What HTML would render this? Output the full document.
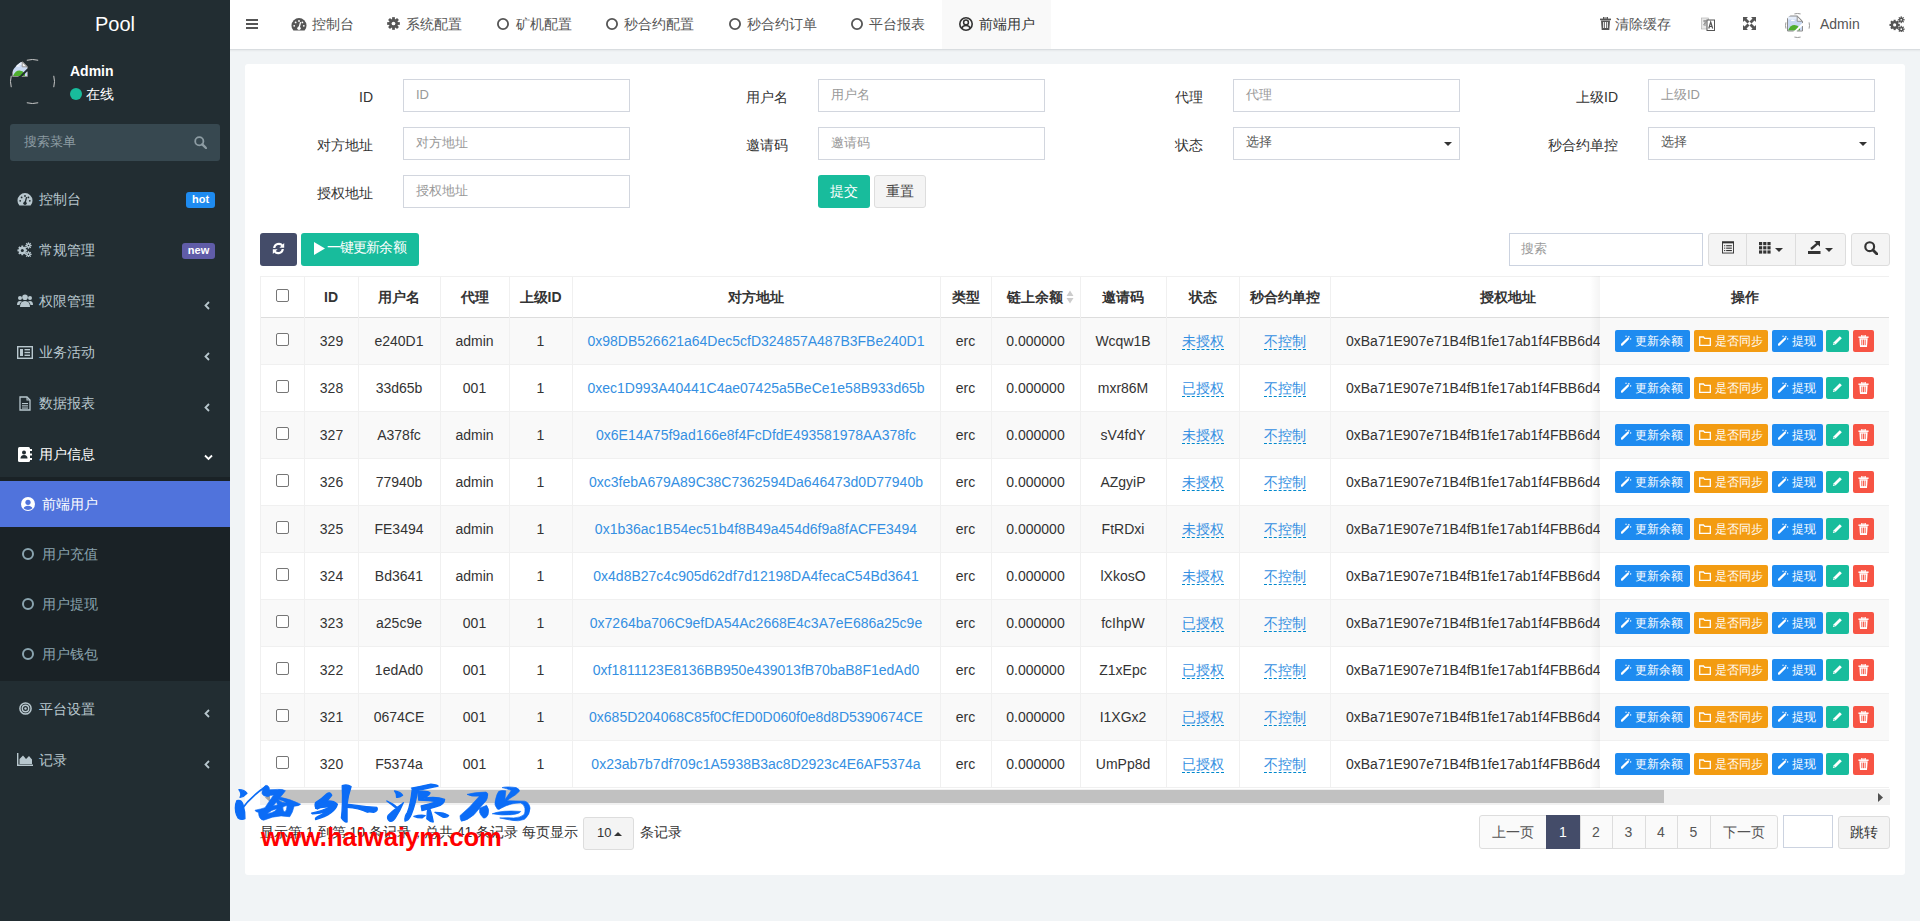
<!DOCTYPE html><html><head><meta charset="utf-8"><style>*{box-sizing:border-box}
html,body{margin:0;padding:0}
body{width:1920px;height:921px;overflow:hidden;background:#f1f4f6;font-family:"Liberation Sans",sans-serif;font-size:14px;color:#333;position:relative}
.abs{position:absolute}
.tx{white-space:nowrap;line-height:20px}
svg{display:block}
.ed{border-bottom:1px dashed #0088cc;padding-bottom:0}
</style></head><body><div class="abs" style="left:0px;top:0px;width:230px;height:921px;background:#222d32"></div>
<div class="abs tx" style="left:15.0px;top:14.0px;width:200px;text-align:center;line-height:20px;font-size:20px;color:#fff;font-weight:normal;">Pool</div>
<svg class="abs" style="left:9.0px;top:58.0px" width="47.0" height="47.0" viewBox="0 0 47.0 47.0" ><defs><clipPath id="cpa"><circle cx="23.5" cy="23.5" r="22.5"/></clipPath></defs><g clip-path="url(#cpa)"><g transform="translate(3.0,3.0)"><path d="M1 1 H10 L15 6 V15 H1 Z" fill="#c9d9f3"/><path d="M1 1 H10 L11 4 H1 Z" fill="#e6eefb"/><path d="M4 5 Q5 3.6 6.3 4.4 Q7.6 4 7.8 5.4 H4 Z" fill="#fff"/><path d="M1 15 Q3.5 9.5 7.5 9.6 Q10.5 9.8 13 12.5 V15 Z" fill="#4fae2e"/><path d="M15.6 7.2 L6.8 16 H9.6 L15.6 10 Z" fill="#222d32"/><path d="M10.2 0.8 V5.8 H15.2 Z" fill="#f4f4f4" stroke="#8a8a8a" stroke-width="0.9"/><path d="M0.5 15.5 V0.5 H10.3 L15.5 5.7 V7.6" fill="none" stroke="#8a8a8a" stroke-width="1"/><path d="M15.5 10.6 V15.5 H9.8" fill="none" stroke="#8a8a8a" stroke-width="1"/><path d="M0.5 15.5 H6.6" fill="none" stroke="#8a8a8a" stroke-width="1"/></g></g><path d="M44.75 17.81 A22.0 22.0 0 0 1 44.75 29.19" fill="none" stroke="#c8c8c8" stroke-width="1"/><path d="M29.19 44.75 A22.0 22.0 0 0 1 17.81 44.75" fill="none" stroke="#c8c8c8" stroke-width="1"/><path d="M2.25 29.19 A22.0 22.0 0 0 1 2.25 17.81" fill="none" stroke="#c8c8c8" stroke-width="1"/><path d="M17.81 2.25 A22.0 22.0 0 0 1 29.19 2.25" fill="none" stroke="#c8c8c8" stroke-width="1"/></svg>
<div class="abs tx" style="left:70px;top:61.0px;line-height:20px;font-size:14px;color:#fff;font-weight:bold;">Admin</div>
<div class="abs" style="left:70px;top:88px;width:12px;height:12px;border-radius:50%;background:#18bc9c"></div>
<div class="abs tx" style="left:86px;top:84.0px;line-height:20px;font-size:14px;color:#fff;font-weight:normal;">在线</div>
<div class="abs" style="left:10px;top:124px;width:210px;height:37px;background:#374850;border-radius:3px"></div>
<div class="abs tx" style="left:24px;top:132.0px;line-height:20px;font-size:13px;color:#8d9ca3;font-weight:normal;">搜索菜单</div>
<svg class="abs" style="left:194px;top:136px" width="13" height="13" viewBox="0 0 13 13" ><circle cx="5.3" cy="5.3" r="4.1" fill="none" stroke="#8d9ca3" stroke-width="1.8"/><path d="M8.3 8.3 L12 12" stroke="#8d9ca3" stroke-width="2.4" stroke-linecap="round"/></svg>
<svg class="abs" style="left:17px;top:193px" width="16" height="13" viewBox="0 0 16 13" ><path d="M2.4 12.6 A7.5 7.5 0 1 1 13.6 12.6 Z" fill="#b8c7ce"/><path d="M8 10 L9.6 4.2" stroke="#222d32" stroke-width="1.3"/><circle cx="8" cy="10.2" r="1.7" fill="#222d32"/><circle cx="3.2" cy="7.8" r="0.9" fill="#222d32"/><circle cx="4.6" cy="4.4" r="0.9" fill="#222d32"/><circle cx="8" cy="3" r="0.9" fill="#222d32"/><circle cx="11.4" cy="4.4" r="0.9" fill="#222d32"/><circle cx="12.8" cy="7.8" r="0.9" fill="#222d32"/></svg>
<div class="abs tx" style="left:39px;top:188.7px;line-height:20px;font-size:14px;color:#b8c7ce;font-weight:normal;">控制台</div>
<svg class="abs" style="left:17px;top:242px" width="15" height="15" viewBox="0 0 17 17" ><rect x="4.9" y="4.0" width="2.2" height="4.2" fill="#b8c7ce" transform="rotate(0 6 9.5)"/><rect x="4.9" y="4.0" width="2.2" height="4.2" fill="#b8c7ce" transform="rotate(45 6 9.5)"/><rect x="4.9" y="4.0" width="2.2" height="4.2" fill="#b8c7ce" transform="rotate(90 6 9.5)"/><rect x="4.9" y="4.0" width="2.2" height="4.2" fill="#b8c7ce" transform="rotate(135 6 9.5)"/><rect x="4.9" y="4.0" width="2.2" height="4.2" fill="#b8c7ce" transform="rotate(180 6 9.5)"/><rect x="4.9" y="4.0" width="2.2" height="4.2" fill="#b8c7ce" transform="rotate(225 6 9.5)"/><rect x="4.9" y="4.0" width="2.2" height="4.2" fill="#b8c7ce" transform="rotate(270 6 9.5)"/><rect x="4.9" y="4.0" width="2.2" height="4.2" fill="#b8c7ce" transform="rotate(315 6 9.5)"/><circle cx="6" cy="9.5" r="4.2" fill="#b8c7ce"/><circle cx="6" cy="9.5" r="1.7" fill="#222d32"/><rect x="12.3" y="0.40000000000000013" width="1.4" height="2.3" fill="#b8c7ce" transform="rotate(0 13 4)"/><rect x="12.3" y="0.40000000000000013" width="1.4" height="2.3" fill="#b8c7ce" transform="rotate(45 13 4)"/><rect x="12.3" y="0.40000000000000013" width="1.4" height="2.3" fill="#b8c7ce" transform="rotate(90 13 4)"/><rect x="12.3" y="0.40000000000000013" width="1.4" height="2.3" fill="#b8c7ce" transform="rotate(135 13 4)"/><rect x="12.3" y="0.40000000000000013" width="1.4" height="2.3" fill="#b8c7ce" transform="rotate(180 13 4)"/><rect x="12.3" y="0.40000000000000013" width="1.4" height="2.3" fill="#b8c7ce" transform="rotate(225 13 4)"/><rect x="12.3" y="0.40000000000000013" width="1.4" height="2.3" fill="#b8c7ce" transform="rotate(270 13 4)"/><rect x="12.3" y="0.40000000000000013" width="1.4" height="2.3" fill="#b8c7ce" transform="rotate(315 13 4)"/><circle cx="13" cy="4" r="2.3" fill="#b8c7ce"/><circle cx="13" cy="4" r="0.9" fill="#222d32"/><rect x="12.3" y="10.399999999999999" width="1.4" height="2.3" fill="#b8c7ce" transform="rotate(0 13 14)"/><rect x="12.3" y="10.399999999999999" width="1.4" height="2.3" fill="#b8c7ce" transform="rotate(45 13 14)"/><rect x="12.3" y="10.399999999999999" width="1.4" height="2.3" fill="#b8c7ce" transform="rotate(90 13 14)"/><rect x="12.3" y="10.399999999999999" width="1.4" height="2.3" fill="#b8c7ce" transform="rotate(135 13 14)"/><rect x="12.3" y="10.399999999999999" width="1.4" height="2.3" fill="#b8c7ce" transform="rotate(180 13 14)"/><rect x="12.3" y="10.399999999999999" width="1.4" height="2.3" fill="#b8c7ce" transform="rotate(225 13 14)"/><rect x="12.3" y="10.399999999999999" width="1.4" height="2.3" fill="#b8c7ce" transform="rotate(270 13 14)"/><rect x="12.3" y="10.399999999999999" width="1.4" height="2.3" fill="#b8c7ce" transform="rotate(315 13 14)"/><circle cx="13" cy="14" r="2.3" fill="#b8c7ce"/><circle cx="13" cy="14" r="0.9" fill="#222d32"/></svg>
<div class="abs tx" style="left:39px;top:240.0px;line-height:20px;font-size:14px;color:#b8c7ce;font-weight:normal;">常规管理</div>
<svg class="abs" style="left:17px;top:293px" width="16" height="16" viewBox="0 0 16 16" ><circle cx="8" cy="4.2" r="2.8" fill="#b8c7ce"/><path d="M3 14 Q3 8 8 8 Q13 8 13 14 Z" fill="#b8c7ce"/><circle cx="3" cy="5" r="2" fill="#b8c7ce"/><path d="M0 12 Q0 8 3 8 Q4 8 5 8.6 Q2.5 10 2.5 12 Z" fill="#b8c7ce"/><circle cx="13" cy="5" r="2" fill="#b8c7ce"/><path d="M16 12 Q16 8 13 8 Q12 8 11 8.6 Q13.5 10 13.5 12 Z" fill="#b8c7ce"/></svg>
<div class="abs tx" style="left:39px;top:291.0px;line-height:20px;font-size:14px;color:#b8c7ce;font-weight:normal;">权限管理</div>
<svg class="abs" style="left:204px;top:301px" width="7" height="9" viewBox="0 0 7 9" ><path d="M5 1 L1.5 4.5 L5 8" fill="none" stroke="#b8c7ce" stroke-width="1.8"/></svg>
<svg class="abs" style="left:17px;top:346px" width="16" height="13" viewBox="0 0 16 13" ><rect x="0.7" y="0.7" width="14.6" height="11.6" fill="none" stroke="#b8c7ce" stroke-width="1.4"/><rect x="3" y="3" width="3" height="7" fill="#b8c7ce"/><rect x="7.5" y="3" width="5.5" height="1.4" fill="#b8c7ce"/><rect x="7.5" y="5.8" width="5.5" height="1.4" fill="#b8c7ce"/><rect x="7.5" y="8.6" width="5.5" height="1.4" fill="#b8c7ce"/></svg>
<div class="abs tx" style="left:39px;top:342.0px;line-height:20px;font-size:14px;color:#b8c7ce;font-weight:normal;">业务活动</div>
<svg class="abs" style="left:204px;top:352px" width="7" height="9" viewBox="0 0 7 9" ><path d="M5 1 L1.5 4.5 L5 8" fill="none" stroke="#b8c7ce" stroke-width="1.8"/></svg>
<svg class="abs" style="left:19px;top:396px" width="12" height="15" viewBox="0 0 12 15" ><path d="M1 1 H8 L11 4 V14 H1 Z" fill="none" stroke="#b8c7ce" stroke-width="1.3"/><path d="M8 1 V4 H11" fill="none" stroke="#b8c7ce" stroke-width="1.1"/><rect x="3" y="7" width="6" height="1.1" fill="#b8c7ce"/><rect x="3" y="9.3" width="6" height="1.1" fill="#b8c7ce"/><rect x="3" y="11.5" width="6" height="1.1" fill="#b8c7ce"/></svg>
<div class="abs tx" style="left:39px;top:393.0px;line-height:20px;font-size:14px;color:#b8c7ce;font-weight:normal;">数据报表</div>
<svg class="abs" style="left:204px;top:403px" width="7" height="9" viewBox="0 0 7 9" ><path d="M5 1 L1.5 4.5 L5 8" fill="none" stroke="#b8c7ce" stroke-width="1.8"/></svg>
<div class="abs" style="left:186px;top:192px;width:29px;height:16px;background:#1e8bf0;border-radius:3px"></div>
<div class="abs tx" style="left:180.5px;top:189.2px;width:40px;text-align:center;line-height:20px;font-size:11px;color:#fff;font-weight:bold;">hot</div>
<div class="abs" style="left:182px;top:243px;width:33px;height:16px;background:#605ca8;border-radius:3px"></div>
<div class="abs tx" style="left:178.5px;top:240.2px;width:40px;text-align:center;line-height:20px;font-size:11px;color:#fff;font-weight:bold;">new</div>
<svg class="abs" style="left:18px;top:447px" width="14" height="15" viewBox="0 0 14 15" ><rect x="0" y="0" width="12" height="15" rx="1.5" fill="#fff"/><rect x="12" y="2" width="2" height="2" fill="#fff"/><rect x="12" y="6.5" width="2" height="2" fill="#fff"/><rect x="12" y="11" width="2" height="2" fill="#fff"/><circle cx="6" cy="5.5" r="2" fill="#222d32"/><path d="M2.5 11.5 Q2.5 8 6 8 Q9.5 8 9.5 11.5 Z" fill="#222d32"/></svg>
<div class="abs tx" style="left:39px;top:444.0px;line-height:20px;font-size:14px;color:#fff;font-weight:normal;">用户信息</div>
<svg class="abs" style="left:204px;top:454px" width="9" height="7" viewBox="0 0 9 7" ><path d="M1 1.5 L4.5 5 L8 1.5" fill="none" stroke="#fff" stroke-width="1.8"/></svg>
<div class="abs" style="left:0px;top:477px;width:230px;height:204px;background:#1a2226"></div>
<div class="abs" style="left:0px;top:481px;width:230px;height:46px;background:#5073dc"></div>
<svg class="abs" style="left:21px;top:497px" width="14" height="14" viewBox="0 0 14 14" ><circle cx="7" cy="7" r="7" fill="#fff"/><circle cx="7" cy="5.3" r="2.6" fill="#5073dc"/><path d="M2.5 11.3 Q3.5 8.8 7 8.8 Q10.5 8.8 11.5 11.3 Q9.5 13 7 13 Q4.5 13 2.5 11.3 Z" fill="#5073dc"/></svg>
<div class="abs tx" style="left:42px;top:494.0px;line-height:20px;font-size:14px;color:#fff;font-weight:normal;">前端用户</div>
<svg class="abs" style="left:22px;top:548px" width="12" height="12" viewBox="0 0 12 12" ><circle cx="6" cy="6" r="5.0" fill="none" stroke="#8aa4af" stroke-width="2"/></svg>
<div class="abs tx" style="left:42px;top:544.0px;line-height:20px;font-size:14px;color:#8aa4af;font-weight:normal;">用户充值</div>
<svg class="abs" style="left:22px;top:598px" width="12" height="12" viewBox="0 0 12 12" ><circle cx="6" cy="6" r="5.0" fill="none" stroke="#8aa4af" stroke-width="2"/></svg>
<div class="abs tx" style="left:42px;top:594.0px;line-height:20px;font-size:14px;color:#8aa4af;font-weight:normal;">用户提现</div>
<svg class="abs" style="left:22px;top:648px" width="12" height="12" viewBox="0 0 12 12" ><circle cx="6" cy="6" r="5.0" fill="none" stroke="#8aa4af" stroke-width="2"/></svg>
<div class="abs tx" style="left:42px;top:644.0px;line-height:20px;font-size:14px;color:#8aa4af;font-weight:normal;">用户钱包</div>
<svg class="abs" style="left:19px;top:702px" width="13" height="13" viewBox="0 0 13 13" ><circle cx="6.5" cy="6.5" r="5.6" fill="none" stroke="#b8c7ce" stroke-width="1.5"/><circle cx="6.5" cy="6.5" r="3.2" fill="none" stroke="#b8c7ce" stroke-width="1.4"/><circle cx="6.5" cy="6.5" r="1.2" fill="#b8c7ce"/></svg>
<div class="abs tx" style="left:39px;top:698.5px;line-height:20px;font-size:14px;color:#b8c7ce;font-weight:normal;">平台设置</div>
<svg class="abs" style="left:204px;top:709px" width="7" height="9" viewBox="0 0 7 9" ><path d="M5 1 L1.5 4.5 L5 8" fill="none" stroke="#b8c7ce" stroke-width="1.8"/></svg>
<svg class="abs" style="left:17px;top:753px" width="16" height="13" viewBox="0 0 16 13" ><path d="M0.7 0 V12.3 H16" fill="none" stroke="#b8c7ce" stroke-width="1.4"/><path d="M2.5 11 L2.5 6 L6 2.5 L9 6 L12 3 L15 6.5 L15 11 Z" fill="#b8c7ce"/></svg>
<div class="abs tx" style="left:39px;top:750.0px;line-height:20px;font-size:14px;color:#b8c7ce;font-weight:normal;">记录</div>
<svg class="abs" style="left:204px;top:760px" width="7" height="9" viewBox="0 0 7 9" ><path d="M5 1 L1.5 4.5 L5 8" fill="none" stroke="#b8c7ce" stroke-width="1.8"/></svg>
<div class="abs" style="left:230px;top:0px;width:1690px;height:50px;background:#fff;border-bottom:1px solid #d9dde0"></div>
<div class="abs" style="left:230px;top:50px;width:1690px;height:2px;background:linear-gradient(rgba(0,0,0,.05),rgba(0,0,0,0))"></div>
<svg class="abs" style="left:246px;top:19px" width="12" height="10" viewBox="0 0 12 10" ><rect x="0" y="0" width="12" height="2" fill="#555"/><rect x="0" y="4" width="12" height="2" fill="#555"/><rect x="0" y="8" width="12" height="2" fill="#555"/></svg>
<svg class="abs" style="left:291px;top:18px" width="16" height="13" viewBox="0 0 16 13" ><path d="M2.4 12.6 A7.5 7.5 0 1 1 13.6 12.6 Z" fill="#555"/><path d="M8 10 L9.6 4.2" stroke="#fff" stroke-width="1.3"/><circle cx="8" cy="10.2" r="1.7" fill="#fff"/><circle cx="3.2" cy="7.8" r="0.9" fill="#fff"/><circle cx="4.6" cy="4.4" r="0.9" fill="#fff"/><circle cx="8" cy="3" r="0.9" fill="#fff"/><circle cx="11.4" cy="4.4" r="0.9" fill="#fff"/><circle cx="12.8" cy="7.8" r="0.9" fill="#fff"/></svg>
<div class="abs tx" style="left:312px;top:14.0px;line-height:20px;font-size:14px;color:#555;font-weight:normal;">控制台</div>
<svg class="abs" style="left:387px;top:17px" width="13" height="13" viewBox="0 0 16 16" ><rect x="6.3" y="0.2" width="3.4" height="3.6" fill="#555" transform="rotate(0 8 8)"/><rect x="6.3" y="0.2" width="3.4" height="3.6" fill="#555" transform="rotate(45 8 8)"/><rect x="6.3" y="0.2" width="3.4" height="3.6" fill="#555" transform="rotate(90 8 8)"/><rect x="6.3" y="0.2" width="3.4" height="3.6" fill="#555" transform="rotate(135 8 8)"/><rect x="6.3" y="0.2" width="3.4" height="3.6" fill="#555" transform="rotate(180 8 8)"/><rect x="6.3" y="0.2" width="3.4" height="3.6" fill="#555" transform="rotate(225 8 8)"/><rect x="6.3" y="0.2" width="3.4" height="3.6" fill="#555" transform="rotate(270 8 8)"/><rect x="6.3" y="0.2" width="3.4" height="3.6" fill="#555" transform="rotate(315 8 8)"/><circle cx="8" cy="8" r="5.6" fill="#555"/><circle cx="8" cy="8" r="2.3" fill="#fff"/></svg>
<div class="abs tx" style="left:406px;top:14.0px;line-height:20px;font-size:14px;color:#555;font-weight:normal;">系统配置</div>
<svg class="abs" style="left:497px;top:18px" width="12" height="12" viewBox="0 0 12 12" ><circle cx="6" cy="6" r="5.1" fill="none" stroke="#555" stroke-width="1.8"/></svg>
<div class="abs tx" style="left:516px;top:14.0px;line-height:20px;font-size:14px;color:#555;font-weight:normal;">矿机配置</div>
<svg class="abs" style="left:606px;top:18px" width="12" height="12" viewBox="0 0 12 12" ><circle cx="6" cy="6" r="5.1" fill="none" stroke="#555" stroke-width="1.8"/></svg>
<div class="abs tx" style="left:624px;top:14.0px;line-height:20px;font-size:14px;color:#555;font-weight:normal;">秒合约配置</div>
<svg class="abs" style="left:729px;top:18px" width="12" height="12" viewBox="0 0 12 12" ><circle cx="6" cy="6" r="5.1" fill="none" stroke="#555" stroke-width="1.8"/></svg>
<div class="abs tx" style="left:747px;top:14.0px;line-height:20px;font-size:14px;color:#555;font-weight:normal;">秒合约订单</div>
<svg class="abs" style="left:851px;top:18px" width="12" height="12" viewBox="0 0 12 12" ><circle cx="6" cy="6" r="5.1" fill="none" stroke="#555" stroke-width="1.8"/></svg>
<div class="abs tx" style="left:869px;top:14.0px;line-height:20px;font-size:14px;color:#555;font-weight:normal;">平台报表</div>
<div class="abs" style="left:942px;top:0px;width:109px;height:49px;background:#f9f9f9"></div>
<svg class="abs" style="left:959px;top:17px" width="14" height="14" viewBox="0 0 14 14" ><circle cx="7" cy="7" r="6.2" fill="none" stroke="#333" stroke-width="1.6"/><circle cx="7" cy="5.4" r="2.4" fill="none" stroke="#333" stroke-width="1.5"/><path d="M2.8 11.2 Q3.8 8.6 7 8.6 Q10.2 8.6 11.2 11.2" fill="none" stroke="#333" stroke-width="1.5"/></svg>
<div class="abs tx" style="left:979px;top:13.5px;line-height:20px;font-size:14px;color:#333;font-weight:normal;">前端用户</div>
<svg class="abs" style="left:1600px;top:17px" width="11" height="13" viewBox="0 0 11 13" ><rect x="0" y="1.6" width="11" height="1.6" fill="#555"/><rect x="3.5" y="0" width="4" height="2" fill="none" stroke="#555" stroke-width="1"/><path d="M1 3.5 H10 L9.3 13 H1.7 Z" fill="#555"/><rect x="3.2" y="5" width="1" height="6" fill="#fff"/><rect x="5" y="5" width="1" height="6" fill="#fff"/><rect x="6.8" y="5" width="1" height="6" fill="#fff"/></svg>
<div class="abs tx" style="left:1615px;top:14.0px;line-height:20px;font-size:14px;color:#555;font-weight:normal;">清除缓存</div>
<svg class="abs" style="left:1701px;top:17px" width="14" height="14" viewBox="0 0 14 14" ><rect x="0.5" y="1" width="7" height="11" fill="#e8e8e8" stroke="#aaa" stroke-width="0.6"/><rect x="6" y="3" width="7.5" height="10.5" fill="#fff" stroke="#555" stroke-width="1"/><path d="M7.8 11.5 L9.7 5 L11.7 11.5 M8.5 9.5 H11" fill="none" stroke="#555" stroke-width="1.2"/><path d="M2 4 H6 M4 3 V9 M2.2 8 L5.5 5" stroke="#777" stroke-width="0.8" fill="none"/></svg>
<svg class="abs" style="left:1743px;top:17px" width="13" height="13" viewBox="0 0 13 13" ><path d="M0 0 H5 L3.5 1.5 L6.5 4.5 L4.5 6.5 L1.5 3.5 L0 5 Z" fill="#555"/><path d="M13 0 V5 L11.5 3.5 L8.5 6.5 L6.5 4.5 L9.5 1.5 L8 0 Z" fill="#555"/><path d="M0 13 V8 L1.5 9.5 L4.5 6.5 L6.5 8.5 L3.5 11.5 L5 13 Z" fill="#555"/><path d="M13 13 H8 L9.5 11.5 L6.5 8.5 L8.5 6.5 L11.5 9.5 L13 8 Z" fill="#555"/></svg>
<svg class="abs" style="left:1784.0px;top:11.5px" width="27.0" height="27.0" viewBox="0 0 27.0 27.0" ><defs><clipPath id="cpb"><circle cx="13.5" cy="13.5" r="12.5"/></clipPath></defs><g clip-path="url(#cpb)"><g transform="translate(3.0,3.5)"><path d="M1 1 H10 L15 6 V15 H1 Z" fill="#c9d9f3"/><path d="M1 1 H10 L11 4 H1 Z" fill="#e6eefb"/><path d="M4 5 Q5 3.6 6.3 4.4 Q7.6 4 7.8 5.4 H4 Z" fill="#fff"/><path d="M1 15 Q3.5 9.5 7.5 9.6 Q10.5 9.8 13 12.5 V15 Z" fill="#4fae2e"/><path d="M15.6 7.2 L6.8 16 H9.6 L15.6 10 Z" fill="#fff"/><path d="M10.2 0.8 V5.8 H15.2 Z" fill="#f4f4f4" stroke="#8a8a8a" stroke-width="0.9"/><path d="M0.5 15.5 V0.5 H10.3 L15.5 5.7 V7.6" fill="none" stroke="#8a8a8a" stroke-width="1"/><path d="M15.5 10.6 V15.5 H9.8" fill="none" stroke="#8a8a8a" stroke-width="1"/><path d="M0.5 15.5 H6.6" fill="none" stroke="#8a8a8a" stroke-width="1"/></g></g><path d="M25.09 10.39 A12.0 12.0 0 0 1 25.09 16.61" fill="none" stroke="#999" stroke-width="1"/><path d="M16.61 25.09 A12.0 12.0 0 0 1 10.39 25.09" fill="none" stroke="#999" stroke-width="1"/><path d="M1.91 16.61 A12.0 12.0 0 0 1 1.91 10.39" fill="none" stroke="#999" stroke-width="1"/><path d="M10.39 1.91 A12.0 12.0 0 0 1 16.61 1.91" fill="none" stroke="#999" stroke-width="1"/></svg>
<div class="abs tx" style="left:1820px;top:14.0px;line-height:20px;font-size:14px;color:#555;font-weight:normal;">Admin</div>
<svg class="abs" style="left:1889px;top:16px" width="16" height="16" viewBox="0 0 17 17" ><rect x="4.9" y="4.0" width="2.2" height="4.2" fill="#555" transform="rotate(0 6 9.5)"/><rect x="4.9" y="4.0" width="2.2" height="4.2" fill="#555" transform="rotate(45 6 9.5)"/><rect x="4.9" y="4.0" width="2.2" height="4.2" fill="#555" transform="rotate(90 6 9.5)"/><rect x="4.9" y="4.0" width="2.2" height="4.2" fill="#555" transform="rotate(135 6 9.5)"/><rect x="4.9" y="4.0" width="2.2" height="4.2" fill="#555" transform="rotate(180 6 9.5)"/><rect x="4.9" y="4.0" width="2.2" height="4.2" fill="#555" transform="rotate(225 6 9.5)"/><rect x="4.9" y="4.0" width="2.2" height="4.2" fill="#555" transform="rotate(270 6 9.5)"/><rect x="4.9" y="4.0" width="2.2" height="4.2" fill="#555" transform="rotate(315 6 9.5)"/><circle cx="6" cy="9.5" r="4.2" fill="#555"/><circle cx="6" cy="9.5" r="1.7" fill="#fff"/><rect x="12.3" y="0.40000000000000013" width="1.4" height="2.3" fill="#555" transform="rotate(0 13 4)"/><rect x="12.3" y="0.40000000000000013" width="1.4" height="2.3" fill="#555" transform="rotate(45 13 4)"/><rect x="12.3" y="0.40000000000000013" width="1.4" height="2.3" fill="#555" transform="rotate(90 13 4)"/><rect x="12.3" y="0.40000000000000013" width="1.4" height="2.3" fill="#555" transform="rotate(135 13 4)"/><rect x="12.3" y="0.40000000000000013" width="1.4" height="2.3" fill="#555" transform="rotate(180 13 4)"/><rect x="12.3" y="0.40000000000000013" width="1.4" height="2.3" fill="#555" transform="rotate(225 13 4)"/><rect x="12.3" y="0.40000000000000013" width="1.4" height="2.3" fill="#555" transform="rotate(270 13 4)"/><rect x="12.3" y="0.40000000000000013" width="1.4" height="2.3" fill="#555" transform="rotate(315 13 4)"/><circle cx="13" cy="4" r="2.3" fill="#555"/><circle cx="13" cy="4" r="0.9" fill="#fff"/><rect x="12.3" y="10.399999999999999" width="1.4" height="2.3" fill="#555" transform="rotate(0 13 14)"/><rect x="12.3" y="10.399999999999999" width="1.4" height="2.3" fill="#555" transform="rotate(45 13 14)"/><rect x="12.3" y="10.399999999999999" width="1.4" height="2.3" fill="#555" transform="rotate(90 13 14)"/><rect x="12.3" y="10.399999999999999" width="1.4" height="2.3" fill="#555" transform="rotate(135 13 14)"/><rect x="12.3" y="10.399999999999999" width="1.4" height="2.3" fill="#555" transform="rotate(180 13 14)"/><rect x="12.3" y="10.399999999999999" width="1.4" height="2.3" fill="#555" transform="rotate(225 13 14)"/><rect x="12.3" y="10.399999999999999" width="1.4" height="2.3" fill="#555" transform="rotate(270 13 14)"/><rect x="12.3" y="10.399999999999999" width="1.4" height="2.3" fill="#555" transform="rotate(315 13 14)"/><circle cx="13" cy="14" r="2.3" fill="#555"/><circle cx="13" cy="14" r="0.9" fill="#fff"/></svg>
<div class="abs" style="left:245px;top:64px;width:1660px;height:811px;background:#fff;border-radius:3px"></div>
<div class="abs tx" style="right:1547px;top:87.0px;line-height:20px;text-align:right;font-size:14px;color:#333;font-weight:normal;">ID</div>
<div class="abs" style="left:403px;top:79px;width:227px;height:33px;border:1px solid #d2d6de;background:#fff"></div>
<div class="abs tx" style="left:416px;top:85.0px;line-height:20px;font-size:13px;color:#999;font-weight:normal;">ID</div>
<div class="abs tx" style="right:1132px;top:87.0px;line-height:20px;text-align:right;font-size:14px;color:#333;font-weight:normal;">用户名</div>
<div class="abs" style="left:818px;top:79px;width:227px;height:33px;border:1px solid #d2d6de;background:#fff"></div>
<div class="abs tx" style="left:831px;top:85.0px;line-height:20px;font-size:13px;color:#999;font-weight:normal;">用户名</div>
<div class="abs tx" style="right:717px;top:87.0px;line-height:20px;text-align:right;font-size:14px;color:#333;font-weight:normal;">代理</div>
<div class="abs" style="left:1233px;top:79px;width:227px;height:33px;border:1px solid #d2d6de;background:#fff"></div>
<div class="abs tx" style="left:1246px;top:85.0px;line-height:20px;font-size:13px;color:#999;font-weight:normal;">代理</div>
<div class="abs tx" style="right:302px;top:87.0px;line-height:20px;text-align:right;font-size:14px;color:#333;font-weight:normal;">上级ID</div>
<div class="abs" style="left:1648px;top:79px;width:227px;height:33px;border:1px solid #d2d6de;background:#fff"></div>
<div class="abs tx" style="left:1661px;top:85.0px;line-height:20px;font-size:13px;color:#999;font-weight:normal;">上级ID</div>
<div class="abs tx" style="right:1547px;top:135.0px;line-height:20px;text-align:right;font-size:14px;color:#333;font-weight:normal;">对方地址</div>
<div class="abs" style="left:403px;top:127px;width:227px;height:33px;border:1px solid #d2d6de;background:#fff"></div>
<div class="abs tx" style="left:416px;top:133.0px;line-height:20px;font-size:13px;color:#999;font-weight:normal;">对方地址</div>
<div class="abs tx" style="right:1132px;top:135.0px;line-height:20px;text-align:right;font-size:14px;color:#333;font-weight:normal;">邀请码</div>
<div class="abs" style="left:818px;top:127px;width:227px;height:33px;border:1px solid #d2d6de;background:#fff"></div>
<div class="abs tx" style="left:831px;top:133.0px;line-height:20px;font-size:13px;color:#999;font-weight:normal;">邀请码</div>
<div class="abs tx" style="right:717px;top:135.0px;line-height:20px;text-align:right;font-size:14px;color:#333;font-weight:normal;">状态</div>
<div class="abs" style="left:1233px;top:127px;width:227px;height:33px;border:1px solid #d2d6de;background:#fff"></div>
<div class="abs tx" style="left:1246px;top:132.0px;line-height:20px;font-size:13px;color:#555;font-weight:normal;">选择</div>
<svg class="abs" style="left:1444px;top:142px" width="8" height="4" viewBox="0 0 8 4" ><path d="M0 0 L8 0 L4 4 Z" fill="#333"/></svg>
<div class="abs tx" style="right:302px;top:135.0px;line-height:20px;text-align:right;font-size:14px;color:#333;font-weight:normal;">秒合约单控</div>
<div class="abs" style="left:1648px;top:127px;width:227px;height:33px;border:1px solid #d2d6de;background:#fff"></div>
<div class="abs tx" style="left:1661px;top:132.0px;line-height:20px;font-size:13px;color:#555;font-weight:normal;">选择</div>
<svg class="abs" style="left:1859px;top:142px" width="8" height="4" viewBox="0 0 8 4" ><path d="M0 0 L8 0 L4 4 Z" fill="#333"/></svg>
<div class="abs tx" style="right:1547px;top:183.0px;line-height:20px;text-align:right;font-size:14px;color:#333;font-weight:normal;">授权地址</div>
<div class="abs" style="left:403px;top:175px;width:227px;height:33px;border:1px solid #d2d6de;background:#fff"></div>
<div class="abs tx" style="left:416px;top:181.0px;line-height:20px;font-size:13px;color:#999;font-weight:normal;">授权地址</div>
<div class="abs" style="left:818px;top:175px;width:52px;height:33px;background:#18bc9c;border-radius:3px"></div>
<div class="abs tx" style="left:818.0px;top:180.5px;width:52px;text-align:center;line-height:20px;font-size:14px;color:#fff;font-weight:normal;">提交</div>
<div class="abs" style="left:874px;top:175px;width:52px;height:33px;background:#f4f4f4;border:1px solid #ddd;border-radius:3px"></div>
<div class="abs tx" style="left:874.0px;top:180.5px;width:52px;text-align:center;line-height:20px;font-size:14px;color:#444;font-weight:normal;">重置</div>
<div class="abs" style="left:260px;top:233px;width:37px;height:33px;background:#444c69;border-radius:3px"></div>
<svg class="abs" style="left:272px;top:242px" width="13" height="13" viewBox="0 0 13 13" ><path d="M2.2 6 A4.6 4.6 0 0 1 10.4 3.6" fill="none" stroke="#fff" stroke-width="2.2"/><path d="M12.2 1 V5.8 H7.4 Z" fill="#fff"/><path d="M10.8 7 A4.6 4.6 0 0 1 2.6 9.4" fill="none" stroke="#fff" stroke-width="2.2"/><path d="M0.8 12 V7.2 H5.6 Z" fill="#fff"/></svg>
<div class="abs" style="left:301px;top:233px;width:118px;height:33px;background:#18bc9c;border-radius:3px"></div>
<svg class="abs" style="left:314px;top:242px" width="12" height="13" viewBox="0 0 12 13" ><path d="M0 0 L11 6.5 L0 13 Z" fill="#fff"/></svg>
<div class="abs tx" style="left:327px;top:237.3px;line-height:20px;font-size:14px;color:#fff;font-weight:normal;letter-spacing:-0.9px">一键更新余额</div>
<div class="abs" style="left:1509px;top:233px;width:194px;height:33px;border:1px solid #ccd3e0;background:#fff"></div>
<div class="abs tx" style="left:1521px;top:239.0px;line-height:20px;font-size:13px;color:#999;font-weight:normal;">搜索</div>
<div class="abs" style="left:1708px;top:233px;width:138px;height:33px;background:#f4f4f4;border:1px solid #ddd;border-radius:3px"></div>
<div class="abs" style="left:1746px;top:233px;width:1px;height:33px;background:#ddd"></div>
<div class="abs" style="left:1795px;top:233px;width:1px;height:33px;background:#ddd"></div>
<svg class="abs" style="left:1722px;top:241px" width="12" height="13" viewBox="0 0 13 13" ><rect x="0.5" y="0.5" width="12" height="12" fill="none" stroke="#333" stroke-width="1"/><rect x="0" y="0" width="13" height="2" fill="#333"/><rect x="2.3" y="4" width="1.2" height="1.2" fill="#333"/><rect x="4.5" y="4" width="6.2" height="1.2" fill="#333"/><rect x="2.3" y="6.6" width="1.2" height="1.2" fill="#333"/><rect x="4.5" y="6.6" width="6.2" height="1.2" fill="#333"/><rect x="2.3" y="9.2" width="1.2" height="1.2" fill="#333"/><rect x="4.5" y="9.2" width="6.2" height="1.2" fill="#333"/></svg>
<svg class="abs" style="left:1759px;top:242px" width="12" height="12" viewBox="0 0 12 12" ><rect x="0.0" y="0.0" width="3.2" height="3.2" fill="#333"/><rect x="0.0" y="4.2" width="3.2" height="3.2" fill="#333"/><rect x="0.0" y="8.4" width="3.2" height="3.2" fill="#333"/><rect x="4.2" y="0.0" width="3.2" height="3.2" fill="#333"/><rect x="4.2" y="4.2" width="3.2" height="3.2" fill="#333"/><rect x="4.2" y="8.4" width="3.2" height="3.2" fill="#333"/><rect x="8.4" y="0.0" width="3.2" height="3.2" fill="#333"/><rect x="8.4" y="4.2" width="3.2" height="3.2" fill="#333"/><rect x="8.4" y="8.4" width="3.2" height="3.2" fill="#333"/></svg>
<svg class="abs" style="left:1775px;top:248px" width="8" height="4" viewBox="0 0 8 4" ><path d="M0 0 L8 0 L4 4 Z" fill="#333"/></svg>
<svg class="abs" style="left:1808px;top:241px" width="13" height="13" viewBox="0 0 13 13" ><rect x="0" y="10" width="12.5" height="3" fill="#333"/><path d="M6.2 0 H12 V5.8 Z" fill="#333"/><path d="M3 8 L9.6 2.4" stroke="#333" stroke-width="2.3"/></svg>
<svg class="abs" style="left:1825px;top:248px" width="8" height="4" viewBox="0 0 8 4" ><path d="M0 0 L8 0 L4 4 Z" fill="#333"/></svg>
<div class="abs" style="left:1851px;top:233px;width:39px;height:33px;background:#f4f4f4;border:1px solid #ddd;border-radius:3px"></div>
<svg class="abs" style="left:1864px;top:241px" width="14" height="14" viewBox="0 0 13 13" ><circle cx="5.3" cy="5.3" r="4.1" fill="none" stroke="#333" stroke-width="2.0"/><path d="M8.3 8.3 L12 12" stroke="#333" stroke-width="2.6" stroke-linecap="round"/></svg>
<div class="abs" style="left:260px;top:276px;width:1340px;height:512px;overflow:hidden">
<div class="abs" style="left:0px;top:42px;width:1629px;height:47px;background:#f9f9f9"></div>
<div class="abs" style="left:0px;top:89px;width:1629px;height:47px;background:#fff"></div>
<div class="abs" style="left:0px;top:136px;width:1629px;height:47px;background:#f9f9f9"></div>
<div class="abs" style="left:0px;top:183px;width:1629px;height:47px;background:#fff"></div>
<div class="abs" style="left:0px;top:230px;width:1629px;height:47px;background:#f9f9f9"></div>
<div class="abs" style="left:0px;top:277px;width:1629px;height:47px;background:#fff"></div>
<div class="abs" style="left:0px;top:324px;width:1629px;height:47px;background:#f9f9f9"></div>
<div class="abs" style="left:0px;top:371px;width:1629px;height:47px;background:#fff"></div>
<div class="abs" style="left:0px;top:418px;width:1629px;height:47px;background:#f9f9f9"></div>
<div class="abs" style="left:0px;top:465px;width:1629px;height:47px;background:#fff"></div>
<div class="abs" style="left:0px;top:0px;width:1629px;height:1px;background:#f0f0f0"></div>
<div class="abs" style="left:0px;top:41px;width:1629px;height:1px;background:#ddd"></div>
<div class="abs" style="left:0px;top:88px;width:1629px;height:1px;background:#f0f0f0"></div>
<div class="abs" style="left:0px;top:135px;width:1629px;height:1px;background:#f0f0f0"></div>
<div class="abs" style="left:0px;top:182px;width:1629px;height:1px;background:#f0f0f0"></div>
<div class="abs" style="left:0px;top:229px;width:1629px;height:1px;background:#f0f0f0"></div>
<div class="abs" style="left:0px;top:276px;width:1629px;height:1px;background:#f0f0f0"></div>
<div class="abs" style="left:0px;top:323px;width:1629px;height:1px;background:#f0f0f0"></div>
<div class="abs" style="left:0px;top:370px;width:1629px;height:1px;background:#f0f0f0"></div>
<div class="abs" style="left:0px;top:417px;width:1629px;height:1px;background:#f0f0f0"></div>
<div class="abs" style="left:0px;top:464px;width:1629px;height:1px;background:#f0f0f0"></div>
<div class="abs" style="left:0px;top:511px;width:1629px;height:1px;background:#f0f0f0"></div>
<div class="abs" style="left:0px;top:0px;width:1px;height:512px;background:#f0f0f0"></div>
<div class="abs" style="left:44px;top:0px;width:1px;height:512px;background:#f0f0f0"></div>
<div class="abs" style="left:98px;top:0px;width:1px;height:512px;background:#f0f0f0"></div>
<div class="abs" style="left:180px;top:0px;width:1px;height:512px;background:#f0f0f0"></div>
<div class="abs" style="left:249px;top:0px;width:1px;height:512px;background:#f0f0f0"></div>
<div class="abs" style="left:312px;top:0px;width:1px;height:512px;background:#f0f0f0"></div>
<div class="abs" style="left:680px;top:0px;width:1px;height:512px;background:#f0f0f0"></div>
<div class="abs" style="left:731px;top:0px;width:1px;height:512px;background:#f0f0f0"></div>
<div class="abs" style="left:820px;top:0px;width:1px;height:512px;background:#f0f0f0"></div>
<div class="abs" style="left:906px;top:0px;width:1px;height:512px;background:#f0f0f0"></div>
<div class="abs" style="left:979px;top:0px;width:1px;height:512px;background:#f0f0f0"></div>
<div class="abs" style="left:1070px;top:0px;width:1px;height:512px;background:#f0f0f0"></div>
</div>
<div class="abs tx" style="left:231.0px;top:287.0px;width:200px;text-align:center;line-height:20px;font-size:14px;color:#333;font-weight:bold;">ID</div>
<div class="abs tx" style="left:299.0px;top:287.0px;width:200px;text-align:center;line-height:20px;font-size:14px;color:#333;font-weight:bold;">用户名</div>
<div class="abs tx" style="left:374.5px;top:287.0px;width:200px;text-align:center;line-height:20px;font-size:14px;color:#333;font-weight:bold;">代理</div>
<div class="abs tx" style="left:440.5px;top:287.0px;width:200px;text-align:center;line-height:20px;font-size:14px;color:#333;font-weight:bold;">上级ID</div>
<div class="abs tx" style="left:656.0px;top:287.0px;width:200px;text-align:center;line-height:20px;font-size:14px;color:#333;font-weight:bold;">对方地址</div>
<div class="abs tx" style="left:865.5px;top:287.0px;width:200px;text-align:center;line-height:20px;font-size:14px;color:#333;font-weight:bold;">类型</div>
<div class="abs tx" style="left:935.0px;top:287.0px;width:200px;text-align:center;line-height:20px;font-size:14px;color:#333;font-weight:bold;">链上余额</div>
<div class="abs tx" style="left:1023.0px;top:287.0px;width:200px;text-align:center;line-height:20px;font-size:14px;color:#333;font-weight:bold;">邀请码</div>
<div class="abs tx" style="left:1102.5px;top:287.0px;width:200px;text-align:center;line-height:20px;font-size:14px;color:#333;font-weight:bold;">状态</div>
<div class="abs tx" style="left:1184.5px;top:287.0px;width:200px;text-align:center;line-height:20px;font-size:14px;color:#333;font-weight:bold;">秒合约单控</div>
<div class="abs tx" style="left:1408.0px;top:287.0px;width:200px;text-align:center;line-height:20px;font-size:14px;color:#333;font-weight:bold;">授权地址</div>
<svg class="abs" style="left:1066px;top:290px" width="8" height="14" viewBox="0 0 8 14" ><path d="M0.5 6 L4 0.5 L7.5 6 Z M0.5 8 L4 13.5 L7.5 8 Z" fill="#ccc"/></svg>
<div class="abs" style="left:276px;top:289px;width:13px;height:13px;border:1px solid #767676;border-radius:2px;background:#fff"></div>
<div class="abs" style="left:276px;top:333px;width:13px;height:13px;border:1px solid #767676;border-radius:2px;background:#fff"></div>
<div class="abs tx" style="left:305.0px;top:330.5px;width:53px;text-align:center;line-height:20px;font-size:14px;color:#333;font-weight:normal;">329</div>
<div class="abs tx" style="left:358.0px;top:330.5px;width:82px;text-align:center;line-height:20px;font-size:14px;color:#333;font-weight:normal;">e240D1</div>
<div class="abs tx" style="left:440.0px;top:330.5px;width:69px;text-align:center;line-height:20px;font-size:14px;color:#333;font-weight:normal;">admin</div>
<div class="abs tx" style="left:509.0px;top:330.5px;width:63px;text-align:center;line-height:20px;font-size:14px;color:#333;font-weight:normal;">1</div>
<div class="abs tx" style="left:572.0px;top:330.5px;width:368px;text-align:center;line-height:20px;font-size:14px;color:#348fe2;font-weight:normal;">0x98DB526621a64Dec5cfD324857A487B3FBe240D1</div>
<div class="abs tx" style="left:940.0px;top:330.5px;width:51px;text-align:center;line-height:20px;font-size:14px;color:#333;font-weight:normal;">erc</div>
<div class="abs tx" style="left:991.0px;top:330.5px;width:89px;text-align:center;line-height:20px;font-size:14px;color:#333;font-weight:normal;">0.000000</div>
<div class="abs tx" style="left:1080.0px;top:330.5px;width:86px;text-align:center;line-height:20px;font-size:14px;color:#333;font-weight:normal;">Wcqw1B</div>
<div class="abs tx" style="left:1166.5px;top:330.5px;width:73px;text-align:center;line-height:20px;font-size:14px;color:#348fe2;font-weight:normal;"><span class="ed">未授权</span></div>
<div class="abs tx" style="left:1239.0px;top:330.5px;width:91px;text-align:center;line-height:20px;font-size:14px;color:#348fe2;font-weight:normal;"><span class="ed">不控制</span></div>
<div class="abs" style="left:1330px;top:331px;width:270px;height:20px;overflow:hidden"><div class="abs tx" style="left:16px;top:0.0px;line-height:20px;font-size:14px;color:#333;font-weight:normal;">0xBa71E907e71B4fB1fe17ab1f4FBB6d4</div></div>
<div class="abs" style="left:276px;top:380px;width:13px;height:13px;border:1px solid #767676;border-radius:2px;background:#fff"></div>
<div class="abs tx" style="left:305.0px;top:377.5px;width:53px;text-align:center;line-height:20px;font-size:14px;color:#333;font-weight:normal;">328</div>
<div class="abs tx" style="left:358.0px;top:377.5px;width:82px;text-align:center;line-height:20px;font-size:14px;color:#333;font-weight:normal;">33d65b</div>
<div class="abs tx" style="left:440.0px;top:377.5px;width:69px;text-align:center;line-height:20px;font-size:14px;color:#333;font-weight:normal;">001</div>
<div class="abs tx" style="left:509.0px;top:377.5px;width:63px;text-align:center;line-height:20px;font-size:14px;color:#333;font-weight:normal;">1</div>
<div class="abs tx" style="left:572.0px;top:377.5px;width:368px;text-align:center;line-height:20px;font-size:14px;color:#348fe2;font-weight:normal;">0xec1D993A40441C4ae07425a5BeCe1e58B933d65b</div>
<div class="abs tx" style="left:940.0px;top:377.5px;width:51px;text-align:center;line-height:20px;font-size:14px;color:#333;font-weight:normal;">erc</div>
<div class="abs tx" style="left:991.0px;top:377.5px;width:89px;text-align:center;line-height:20px;font-size:14px;color:#333;font-weight:normal;">0.000000</div>
<div class="abs tx" style="left:1080.0px;top:377.5px;width:86px;text-align:center;line-height:20px;font-size:14px;color:#333;font-weight:normal;">mxr86M</div>
<div class="abs tx" style="left:1166.5px;top:377.5px;width:73px;text-align:center;line-height:20px;font-size:14px;color:#348fe2;font-weight:normal;"><span class="ed">已授权</span></div>
<div class="abs tx" style="left:1239.0px;top:377.5px;width:91px;text-align:center;line-height:20px;font-size:14px;color:#348fe2;font-weight:normal;"><span class="ed">不控制</span></div>
<div class="abs" style="left:1330px;top:378px;width:270px;height:20px;overflow:hidden"><div class="abs tx" style="left:16px;top:0.0px;line-height:20px;font-size:14px;color:#333;font-weight:normal;">0xBa71E907e71B4fB1fe17ab1f4FBB6d4</div></div>
<div class="abs" style="left:276px;top:427px;width:13px;height:13px;border:1px solid #767676;border-radius:2px;background:#fff"></div>
<div class="abs tx" style="left:305.0px;top:424.5px;width:53px;text-align:center;line-height:20px;font-size:14px;color:#333;font-weight:normal;">327</div>
<div class="abs tx" style="left:358.0px;top:424.5px;width:82px;text-align:center;line-height:20px;font-size:14px;color:#333;font-weight:normal;">A378fc</div>
<div class="abs tx" style="left:440.0px;top:424.5px;width:69px;text-align:center;line-height:20px;font-size:14px;color:#333;font-weight:normal;">admin</div>
<div class="abs tx" style="left:509.0px;top:424.5px;width:63px;text-align:center;line-height:20px;font-size:14px;color:#333;font-weight:normal;">1</div>
<div class="abs tx" style="left:572.0px;top:424.5px;width:368px;text-align:center;line-height:20px;font-size:14px;color:#348fe2;font-weight:normal;">0x6E14A75f9ad166e8f4FcDfdE493581978AA378fc</div>
<div class="abs tx" style="left:940.0px;top:424.5px;width:51px;text-align:center;line-height:20px;font-size:14px;color:#333;font-weight:normal;">erc</div>
<div class="abs tx" style="left:991.0px;top:424.5px;width:89px;text-align:center;line-height:20px;font-size:14px;color:#333;font-weight:normal;">0.000000</div>
<div class="abs tx" style="left:1080.0px;top:424.5px;width:86px;text-align:center;line-height:20px;font-size:14px;color:#333;font-weight:normal;">sV4fdY</div>
<div class="abs tx" style="left:1166.5px;top:424.5px;width:73px;text-align:center;line-height:20px;font-size:14px;color:#348fe2;font-weight:normal;"><span class="ed">未授权</span></div>
<div class="abs tx" style="left:1239.0px;top:424.5px;width:91px;text-align:center;line-height:20px;font-size:14px;color:#348fe2;font-weight:normal;"><span class="ed">不控制</span></div>
<div class="abs" style="left:1330px;top:425px;width:270px;height:20px;overflow:hidden"><div class="abs tx" style="left:16px;top:0.0px;line-height:20px;font-size:14px;color:#333;font-weight:normal;">0xBa71E907e71B4fB1fe17ab1f4FBB6d4</div></div>
<div class="abs" style="left:276px;top:474px;width:13px;height:13px;border:1px solid #767676;border-radius:2px;background:#fff"></div>
<div class="abs tx" style="left:305.0px;top:471.5px;width:53px;text-align:center;line-height:20px;font-size:14px;color:#333;font-weight:normal;">326</div>
<div class="abs tx" style="left:358.0px;top:471.5px;width:82px;text-align:center;line-height:20px;font-size:14px;color:#333;font-weight:normal;">77940b</div>
<div class="abs tx" style="left:440.0px;top:471.5px;width:69px;text-align:center;line-height:20px;font-size:14px;color:#333;font-weight:normal;">admin</div>
<div class="abs tx" style="left:509.0px;top:471.5px;width:63px;text-align:center;line-height:20px;font-size:14px;color:#333;font-weight:normal;">1</div>
<div class="abs tx" style="left:572.0px;top:471.5px;width:368px;text-align:center;line-height:20px;font-size:14px;color:#348fe2;font-weight:normal;">0xc3febA679A89C38C7362594Da646473d0D77940b</div>
<div class="abs tx" style="left:940.0px;top:471.5px;width:51px;text-align:center;line-height:20px;font-size:14px;color:#333;font-weight:normal;">erc</div>
<div class="abs tx" style="left:991.0px;top:471.5px;width:89px;text-align:center;line-height:20px;font-size:14px;color:#333;font-weight:normal;">0.000000</div>
<div class="abs tx" style="left:1080.0px;top:471.5px;width:86px;text-align:center;line-height:20px;font-size:14px;color:#333;font-weight:normal;">AZgyiP</div>
<div class="abs tx" style="left:1166.5px;top:471.5px;width:73px;text-align:center;line-height:20px;font-size:14px;color:#348fe2;font-weight:normal;"><span class="ed">未授权</span></div>
<div class="abs tx" style="left:1239.0px;top:471.5px;width:91px;text-align:center;line-height:20px;font-size:14px;color:#348fe2;font-weight:normal;"><span class="ed">不控制</span></div>
<div class="abs" style="left:1330px;top:472px;width:270px;height:20px;overflow:hidden"><div class="abs tx" style="left:16px;top:0.0px;line-height:20px;font-size:14px;color:#333;font-weight:normal;">0xBa71E907e71B4fB1fe17ab1f4FBB6d4</div></div>
<div class="abs" style="left:276px;top:521px;width:13px;height:13px;border:1px solid #767676;border-radius:2px;background:#fff"></div>
<div class="abs tx" style="left:305.0px;top:518.5px;width:53px;text-align:center;line-height:20px;font-size:14px;color:#333;font-weight:normal;">325</div>
<div class="abs tx" style="left:358.0px;top:518.5px;width:82px;text-align:center;line-height:20px;font-size:14px;color:#333;font-weight:normal;">FE3494</div>
<div class="abs tx" style="left:440.0px;top:518.5px;width:69px;text-align:center;line-height:20px;font-size:14px;color:#333;font-weight:normal;">admin</div>
<div class="abs tx" style="left:509.0px;top:518.5px;width:63px;text-align:center;line-height:20px;font-size:14px;color:#333;font-weight:normal;">1</div>
<div class="abs tx" style="left:572.0px;top:518.5px;width:368px;text-align:center;line-height:20px;font-size:14px;color:#348fe2;font-weight:normal;">0x1b36ac1B54ec51b4f8B49a454d6f9a8fACFE3494</div>
<div class="abs tx" style="left:940.0px;top:518.5px;width:51px;text-align:center;line-height:20px;font-size:14px;color:#333;font-weight:normal;">erc</div>
<div class="abs tx" style="left:991.0px;top:518.5px;width:89px;text-align:center;line-height:20px;font-size:14px;color:#333;font-weight:normal;">0.000000</div>
<div class="abs tx" style="left:1080.0px;top:518.5px;width:86px;text-align:center;line-height:20px;font-size:14px;color:#333;font-weight:normal;">FtRDxi</div>
<div class="abs tx" style="left:1166.5px;top:518.5px;width:73px;text-align:center;line-height:20px;font-size:14px;color:#348fe2;font-weight:normal;"><span class="ed">未授权</span></div>
<div class="abs tx" style="left:1239.0px;top:518.5px;width:91px;text-align:center;line-height:20px;font-size:14px;color:#348fe2;font-weight:normal;"><span class="ed">不控制</span></div>
<div class="abs" style="left:1330px;top:519px;width:270px;height:20px;overflow:hidden"><div class="abs tx" style="left:16px;top:0.0px;line-height:20px;font-size:14px;color:#333;font-weight:normal;">0xBa71E907e71B4fB1fe17ab1f4FBB6d4</div></div>
<div class="abs" style="left:276px;top:568px;width:13px;height:13px;border:1px solid #767676;border-radius:2px;background:#fff"></div>
<div class="abs tx" style="left:305.0px;top:565.5px;width:53px;text-align:center;line-height:20px;font-size:14px;color:#333;font-weight:normal;">324</div>
<div class="abs tx" style="left:358.0px;top:565.5px;width:82px;text-align:center;line-height:20px;font-size:14px;color:#333;font-weight:normal;">Bd3641</div>
<div class="abs tx" style="left:440.0px;top:565.5px;width:69px;text-align:center;line-height:20px;font-size:14px;color:#333;font-weight:normal;">admin</div>
<div class="abs tx" style="left:509.0px;top:565.5px;width:63px;text-align:center;line-height:20px;font-size:14px;color:#333;font-weight:normal;">1</div>
<div class="abs tx" style="left:572.0px;top:565.5px;width:368px;text-align:center;line-height:20px;font-size:14px;color:#348fe2;font-weight:normal;">0x4d8B27c4c905d62df7d12198DA4fecaC54Bd3641</div>
<div class="abs tx" style="left:940.0px;top:565.5px;width:51px;text-align:center;line-height:20px;font-size:14px;color:#333;font-weight:normal;">erc</div>
<div class="abs tx" style="left:991.0px;top:565.5px;width:89px;text-align:center;line-height:20px;font-size:14px;color:#333;font-weight:normal;">0.000000</div>
<div class="abs tx" style="left:1080.0px;top:565.5px;width:86px;text-align:center;line-height:20px;font-size:14px;color:#333;font-weight:normal;">lXkosO</div>
<div class="abs tx" style="left:1166.5px;top:565.5px;width:73px;text-align:center;line-height:20px;font-size:14px;color:#348fe2;font-weight:normal;"><span class="ed">未授权</span></div>
<div class="abs tx" style="left:1239.0px;top:565.5px;width:91px;text-align:center;line-height:20px;font-size:14px;color:#348fe2;font-weight:normal;"><span class="ed">不控制</span></div>
<div class="abs" style="left:1330px;top:566px;width:270px;height:20px;overflow:hidden"><div class="abs tx" style="left:16px;top:0.0px;line-height:20px;font-size:14px;color:#333;font-weight:normal;">0xBa71E907e71B4fB1fe17ab1f4FBB6d4</div></div>
<div class="abs" style="left:276px;top:615px;width:13px;height:13px;border:1px solid #767676;border-radius:2px;background:#fff"></div>
<div class="abs tx" style="left:305.0px;top:612.5px;width:53px;text-align:center;line-height:20px;font-size:14px;color:#333;font-weight:normal;">323</div>
<div class="abs tx" style="left:358.0px;top:612.5px;width:82px;text-align:center;line-height:20px;font-size:14px;color:#333;font-weight:normal;">a25c9e</div>
<div class="abs tx" style="left:440.0px;top:612.5px;width:69px;text-align:center;line-height:20px;font-size:14px;color:#333;font-weight:normal;">001</div>
<div class="abs tx" style="left:509.0px;top:612.5px;width:63px;text-align:center;line-height:20px;font-size:14px;color:#333;font-weight:normal;">1</div>
<div class="abs tx" style="left:572.0px;top:612.5px;width:368px;text-align:center;line-height:20px;font-size:14px;color:#348fe2;font-weight:normal;">0x7264ba706C9efDA54Ac2668E4c3A7eE686a25c9e</div>
<div class="abs tx" style="left:940.0px;top:612.5px;width:51px;text-align:center;line-height:20px;font-size:14px;color:#333;font-weight:normal;">erc</div>
<div class="abs tx" style="left:991.0px;top:612.5px;width:89px;text-align:center;line-height:20px;font-size:14px;color:#333;font-weight:normal;">0.000000</div>
<div class="abs tx" style="left:1080.0px;top:612.5px;width:86px;text-align:center;line-height:20px;font-size:14px;color:#333;font-weight:normal;">fcIhpW</div>
<div class="abs tx" style="left:1166.5px;top:612.5px;width:73px;text-align:center;line-height:20px;font-size:14px;color:#348fe2;font-weight:normal;"><span class="ed">已授权</span></div>
<div class="abs tx" style="left:1239.0px;top:612.5px;width:91px;text-align:center;line-height:20px;font-size:14px;color:#348fe2;font-weight:normal;"><span class="ed">不控制</span></div>
<div class="abs" style="left:1330px;top:613px;width:270px;height:20px;overflow:hidden"><div class="abs tx" style="left:16px;top:0.0px;line-height:20px;font-size:14px;color:#333;font-weight:normal;">0xBa71E907e71B4fB1fe17ab1f4FBB6d4</div></div>
<div class="abs" style="left:276px;top:662px;width:13px;height:13px;border:1px solid #767676;border-radius:2px;background:#fff"></div>
<div class="abs tx" style="left:305.0px;top:659.5px;width:53px;text-align:center;line-height:20px;font-size:14px;color:#333;font-weight:normal;">322</div>
<div class="abs tx" style="left:358.0px;top:659.5px;width:82px;text-align:center;line-height:20px;font-size:14px;color:#333;font-weight:normal;">1edAd0</div>
<div class="abs tx" style="left:440.0px;top:659.5px;width:69px;text-align:center;line-height:20px;font-size:14px;color:#333;font-weight:normal;">001</div>
<div class="abs tx" style="left:509.0px;top:659.5px;width:63px;text-align:center;line-height:20px;font-size:14px;color:#333;font-weight:normal;">1</div>
<div class="abs tx" style="left:572.0px;top:659.5px;width:368px;text-align:center;line-height:20px;font-size:14px;color:#348fe2;font-weight:normal;">0xf1811123E8136BB950e439013fB70baB8F1edAd0</div>
<div class="abs tx" style="left:940.0px;top:659.5px;width:51px;text-align:center;line-height:20px;font-size:14px;color:#333;font-weight:normal;">erc</div>
<div class="abs tx" style="left:991.0px;top:659.5px;width:89px;text-align:center;line-height:20px;font-size:14px;color:#333;font-weight:normal;">0.000000</div>
<div class="abs tx" style="left:1080.0px;top:659.5px;width:86px;text-align:center;line-height:20px;font-size:14px;color:#333;font-weight:normal;">Z1xEpc</div>
<div class="abs tx" style="left:1166.5px;top:659.5px;width:73px;text-align:center;line-height:20px;font-size:14px;color:#348fe2;font-weight:normal;"><span class="ed">已授权</span></div>
<div class="abs tx" style="left:1239.0px;top:659.5px;width:91px;text-align:center;line-height:20px;font-size:14px;color:#348fe2;font-weight:normal;"><span class="ed">不控制</span></div>
<div class="abs" style="left:1330px;top:660px;width:270px;height:20px;overflow:hidden"><div class="abs tx" style="left:16px;top:0.0px;line-height:20px;font-size:14px;color:#333;font-weight:normal;">0xBa71E907e71B4fB1fe17ab1f4FBB6d4</div></div>
<div class="abs" style="left:276px;top:709px;width:13px;height:13px;border:1px solid #767676;border-radius:2px;background:#fff"></div>
<div class="abs tx" style="left:305.0px;top:706.5px;width:53px;text-align:center;line-height:20px;font-size:14px;color:#333;font-weight:normal;">321</div>
<div class="abs tx" style="left:358.0px;top:706.5px;width:82px;text-align:center;line-height:20px;font-size:14px;color:#333;font-weight:normal;">0674CE</div>
<div class="abs tx" style="left:440.0px;top:706.5px;width:69px;text-align:center;line-height:20px;font-size:14px;color:#333;font-weight:normal;">001</div>
<div class="abs tx" style="left:509.0px;top:706.5px;width:63px;text-align:center;line-height:20px;font-size:14px;color:#333;font-weight:normal;">1</div>
<div class="abs tx" style="left:572.0px;top:706.5px;width:368px;text-align:center;line-height:20px;font-size:14px;color:#348fe2;font-weight:normal;">0x685D204068C85f0CfED0D060f0e8d8D5390674CE</div>
<div class="abs tx" style="left:940.0px;top:706.5px;width:51px;text-align:center;line-height:20px;font-size:14px;color:#333;font-weight:normal;">erc</div>
<div class="abs tx" style="left:991.0px;top:706.5px;width:89px;text-align:center;line-height:20px;font-size:14px;color:#333;font-weight:normal;">0.000000</div>
<div class="abs tx" style="left:1080.0px;top:706.5px;width:86px;text-align:center;line-height:20px;font-size:14px;color:#333;font-weight:normal;">I1XGx2</div>
<div class="abs tx" style="left:1166.5px;top:706.5px;width:73px;text-align:center;line-height:20px;font-size:14px;color:#348fe2;font-weight:normal;"><span class="ed">已授权</span></div>
<div class="abs tx" style="left:1239.0px;top:706.5px;width:91px;text-align:center;line-height:20px;font-size:14px;color:#348fe2;font-weight:normal;"><span class="ed">不控制</span></div>
<div class="abs" style="left:1330px;top:707px;width:270px;height:20px;overflow:hidden"><div class="abs tx" style="left:16px;top:0.0px;line-height:20px;font-size:14px;color:#333;font-weight:normal;">0xBa71E907e71B4fB1fe17ab1f4FBB6d4</div></div>
<div class="abs" style="left:276px;top:756px;width:13px;height:13px;border:1px solid #767676;border-radius:2px;background:#fff"></div>
<div class="abs tx" style="left:305.0px;top:753.5px;width:53px;text-align:center;line-height:20px;font-size:14px;color:#333;font-weight:normal;">320</div>
<div class="abs tx" style="left:358.0px;top:753.5px;width:82px;text-align:center;line-height:20px;font-size:14px;color:#333;font-weight:normal;">F5374a</div>
<div class="abs tx" style="left:440.0px;top:753.5px;width:69px;text-align:center;line-height:20px;font-size:14px;color:#333;font-weight:normal;">001</div>
<div class="abs tx" style="left:509.0px;top:753.5px;width:63px;text-align:center;line-height:20px;font-size:14px;color:#333;font-weight:normal;">1</div>
<div class="abs tx" style="left:572.0px;top:753.5px;width:368px;text-align:center;line-height:20px;font-size:14px;color:#348fe2;font-weight:normal;">0x23ab7b7df709c1A5938B3ac8D2923c4E6AF5374a</div>
<div class="abs tx" style="left:940.0px;top:753.5px;width:51px;text-align:center;line-height:20px;font-size:14px;color:#333;font-weight:normal;">erc</div>
<div class="abs tx" style="left:991.0px;top:753.5px;width:89px;text-align:center;line-height:20px;font-size:14px;color:#333;font-weight:normal;">0.000000</div>
<div class="abs tx" style="left:1080.0px;top:753.5px;width:86px;text-align:center;line-height:20px;font-size:14px;color:#333;font-weight:normal;">UmPp8d</div>
<div class="abs tx" style="left:1166.5px;top:753.5px;width:73px;text-align:center;line-height:20px;font-size:14px;color:#348fe2;font-weight:normal;"><span class="ed">已授权</span></div>
<div class="abs tx" style="left:1239.0px;top:753.5px;width:91px;text-align:center;line-height:20px;font-size:14px;color:#348fe2;font-weight:normal;"><span class="ed">不控制</span></div>
<div class="abs" style="left:1330px;top:754px;width:270px;height:20px;overflow:hidden"><div class="abs tx" style="left:16px;top:0.0px;line-height:20px;font-size:14px;color:#333;font-weight:normal;">0xBa71E907e71B4fB1fe17ab1f4FBB6d4</div></div>
<div class="abs" style="left:1590px;top:276px;width:10px;height:512px;background:linear-gradient(to right,rgba(0,0,0,0),rgba(0,0,0,.045))"></div>
<div class="abs" style="left:1600px;top:276px;width:289px;height:512px;background:#fff"></div>
<div class="abs" style="left:1600px;top:276px;width:289px;height:1px;background:#f0f0f0"></div>
<div class="abs" style="left:1600px;top:317px;width:289px;height:1px;background:#ddd"></div>
<div class="abs" style="left:1600px;top:318px;width:289px;height:46px;background:#f9f9f9"></div>
<div class="abs" style="left:1600px;top:364px;width:289px;height:1px;background:#f0f0f0"></div>
<div class="abs" style="left:1600px;top:365px;width:289px;height:46px;background:#fff"></div>
<div class="abs" style="left:1600px;top:411px;width:289px;height:1px;background:#f0f0f0"></div>
<div class="abs" style="left:1600px;top:412px;width:289px;height:46px;background:#f9f9f9"></div>
<div class="abs" style="left:1600px;top:458px;width:289px;height:1px;background:#f0f0f0"></div>
<div class="abs" style="left:1600px;top:459px;width:289px;height:46px;background:#fff"></div>
<div class="abs" style="left:1600px;top:505px;width:289px;height:1px;background:#f0f0f0"></div>
<div class="abs" style="left:1600px;top:506px;width:289px;height:46px;background:#f9f9f9"></div>
<div class="abs" style="left:1600px;top:552px;width:289px;height:1px;background:#f0f0f0"></div>
<div class="abs" style="left:1600px;top:553px;width:289px;height:46px;background:#fff"></div>
<div class="abs" style="left:1600px;top:599px;width:289px;height:1px;background:#f0f0f0"></div>
<div class="abs" style="left:1600px;top:600px;width:289px;height:46px;background:#f9f9f9"></div>
<div class="abs" style="left:1600px;top:646px;width:289px;height:1px;background:#f0f0f0"></div>
<div class="abs" style="left:1600px;top:647px;width:289px;height:46px;background:#fff"></div>
<div class="abs" style="left:1600px;top:693px;width:289px;height:1px;background:#f0f0f0"></div>
<div class="abs" style="left:1600px;top:694px;width:289px;height:46px;background:#f9f9f9"></div>
<div class="abs" style="left:1600px;top:740px;width:289px;height:1px;background:#f0f0f0"></div>
<div class="abs" style="left:1600px;top:741px;width:289px;height:46px;background:#fff"></div>
<div class="abs" style="left:1600px;top:787px;width:289px;height:1px;background:#f0f0f0"></div>
<div class="abs tx" style="left:1695.0px;top:287.0px;width:100px;text-align:center;line-height:20px;font-size:14px;color:#333;font-weight:bold;">操作</div>
<div class="abs" style="left:1615px;top:330px;width:75px;height:22px;background:#1e8bf0;border-radius:2px"></div>
<svg class="abs" style="left:1621px;top:335px" width="11" height="11" viewBox="0 0 12 11" ><path d="M1 10 L7.5 3.5" stroke="#fff" stroke-width="2.4" stroke-linecap="round"/><path d="M8.5 0.5 V2.5 M7.5 1.5 H9.5 M10.5 3 V4.5 M9.8 3.8 H11.2 M5.5 0.3 V1.5 M4.9 0.9 H6.1" stroke="#fff" stroke-width="0.8"/></svg>
<div class="abs tx" style="left:1635px;top:331.0px;line-height:20px;font-size:12px;color:#fff;font-weight:normal;">更新余额</div>
<div class="abs" style="left:1694px;top:330px;width:74px;height:22px;background:#f39c12;border-radius:2px"></div>
<svg class="abs" style="left:1699px;top:336px" width="12" height="10" viewBox="0 0 12 10" ><path d="M0.7 1 H4.5 L5.7 2.4 H11.3 V9.3 H0.7 Z" fill="none" stroke="#fff" stroke-width="1.3"/></svg>
<div class="abs tx" style="left:1715px;top:331.0px;line-height:20px;font-size:12px;color:#fff;font-weight:normal;">是否同步</div>
<div class="abs" style="left:1772px;top:330px;width:51px;height:22px;background:#1e8bf0;border-radius:2px"></div>
<svg class="abs" style="left:1778px;top:335px" width="11" height="11" viewBox="0 0 12 11" ><path d="M1 10 L7.5 3.5" stroke="#fff" stroke-width="2.4" stroke-linecap="round"/><path d="M8.5 0.5 V2.5 M7.5 1.5 H9.5 M10.5 3 V4.5 M9.8 3.8 H11.2 M5.5 0.3 V1.5 M4.9 0.9 H6.1" stroke="#fff" stroke-width="0.8"/></svg>
<div class="abs tx" style="left:1792px;top:331.0px;line-height:20px;font-size:12px;color:#fff;font-weight:normal;">提现</div>
<div class="abs" style="left:1826px;top:330px;width:23px;height:22px;background:#18bc9c;border-radius:2px"></div>
<svg class="abs" style="left:1832px;top:335px" width="11" height="11" viewBox="0 0 12 12" ><path d="M1 11 L1.6 8.2 L8.5 1.3 L10.7 3.5 L3.8 10.4 Z" fill="#fff"/><path d="M1.6 8.6 L3.4 10.4" stroke="#18bc9c" stroke-width="0.7"/></svg>
<div class="abs" style="left:1853px;top:330px;width:21px;height:22px;background:#f75444;border-radius:2px"></div>
<svg class="abs" style="left:1858px;top:335px" width="11" height="12" viewBox="0 0 11 13" ><rect x="0" y="1.6" width="11" height="1.6" fill="#fff"/><rect x="3.5" y="0" width="4" height="2" fill="none" stroke="#fff" stroke-width="1"/><path d="M1 3.5 H10 L9.3 13 H1.7 Z" fill="#fff"/><rect x="3.2" y="5" width="1" height="6" fill="#f75444"/><rect x="5" y="5" width="1" height="6" fill="#f75444"/><rect x="6.8" y="5" width="1" height="6" fill="#f75444"/></svg>
<div class="abs" style="left:1615px;top:377px;width:75px;height:22px;background:#1e8bf0;border-radius:2px"></div>
<svg class="abs" style="left:1621px;top:382px" width="11" height="11" viewBox="0 0 12 11" ><path d="M1 10 L7.5 3.5" stroke="#fff" stroke-width="2.4" stroke-linecap="round"/><path d="M8.5 0.5 V2.5 M7.5 1.5 H9.5 M10.5 3 V4.5 M9.8 3.8 H11.2 M5.5 0.3 V1.5 M4.9 0.9 H6.1" stroke="#fff" stroke-width="0.8"/></svg>
<div class="abs tx" style="left:1635px;top:378.0px;line-height:20px;font-size:12px;color:#fff;font-weight:normal;">更新余额</div>
<div class="abs" style="left:1694px;top:377px;width:74px;height:22px;background:#f39c12;border-radius:2px"></div>
<svg class="abs" style="left:1699px;top:383px" width="12" height="10" viewBox="0 0 12 10" ><path d="M0.7 1 H4.5 L5.7 2.4 H11.3 V9.3 H0.7 Z" fill="none" stroke="#fff" stroke-width="1.3"/></svg>
<div class="abs tx" style="left:1715px;top:378.0px;line-height:20px;font-size:12px;color:#fff;font-weight:normal;">是否同步</div>
<div class="abs" style="left:1772px;top:377px;width:51px;height:22px;background:#1e8bf0;border-radius:2px"></div>
<svg class="abs" style="left:1778px;top:382px" width="11" height="11" viewBox="0 0 12 11" ><path d="M1 10 L7.5 3.5" stroke="#fff" stroke-width="2.4" stroke-linecap="round"/><path d="M8.5 0.5 V2.5 M7.5 1.5 H9.5 M10.5 3 V4.5 M9.8 3.8 H11.2 M5.5 0.3 V1.5 M4.9 0.9 H6.1" stroke="#fff" stroke-width="0.8"/></svg>
<div class="abs tx" style="left:1792px;top:378.0px;line-height:20px;font-size:12px;color:#fff;font-weight:normal;">提现</div>
<div class="abs" style="left:1826px;top:377px;width:23px;height:22px;background:#18bc9c;border-radius:2px"></div>
<svg class="abs" style="left:1832px;top:382px" width="11" height="11" viewBox="0 0 12 12" ><path d="M1 11 L1.6 8.2 L8.5 1.3 L10.7 3.5 L3.8 10.4 Z" fill="#fff"/><path d="M1.6 8.6 L3.4 10.4" stroke="#18bc9c" stroke-width="0.7"/></svg>
<div class="abs" style="left:1853px;top:377px;width:21px;height:22px;background:#f75444;border-radius:2px"></div>
<svg class="abs" style="left:1858px;top:382px" width="11" height="12" viewBox="0 0 11 13" ><rect x="0" y="1.6" width="11" height="1.6" fill="#fff"/><rect x="3.5" y="0" width="4" height="2" fill="none" stroke="#fff" stroke-width="1"/><path d="M1 3.5 H10 L9.3 13 H1.7 Z" fill="#fff"/><rect x="3.2" y="5" width="1" height="6" fill="#f75444"/><rect x="5" y="5" width="1" height="6" fill="#f75444"/><rect x="6.8" y="5" width="1" height="6" fill="#f75444"/></svg>
<div class="abs" style="left:1615px;top:424px;width:75px;height:22px;background:#1e8bf0;border-radius:2px"></div>
<svg class="abs" style="left:1621px;top:429px" width="11" height="11" viewBox="0 0 12 11" ><path d="M1 10 L7.5 3.5" stroke="#fff" stroke-width="2.4" stroke-linecap="round"/><path d="M8.5 0.5 V2.5 M7.5 1.5 H9.5 M10.5 3 V4.5 M9.8 3.8 H11.2 M5.5 0.3 V1.5 M4.9 0.9 H6.1" stroke="#fff" stroke-width="0.8"/></svg>
<div class="abs tx" style="left:1635px;top:425.0px;line-height:20px;font-size:12px;color:#fff;font-weight:normal;">更新余额</div>
<div class="abs" style="left:1694px;top:424px;width:74px;height:22px;background:#f39c12;border-radius:2px"></div>
<svg class="abs" style="left:1699px;top:430px" width="12" height="10" viewBox="0 0 12 10" ><path d="M0.7 1 H4.5 L5.7 2.4 H11.3 V9.3 H0.7 Z" fill="none" stroke="#fff" stroke-width="1.3"/></svg>
<div class="abs tx" style="left:1715px;top:425.0px;line-height:20px;font-size:12px;color:#fff;font-weight:normal;">是否同步</div>
<div class="abs" style="left:1772px;top:424px;width:51px;height:22px;background:#1e8bf0;border-radius:2px"></div>
<svg class="abs" style="left:1778px;top:429px" width="11" height="11" viewBox="0 0 12 11" ><path d="M1 10 L7.5 3.5" stroke="#fff" stroke-width="2.4" stroke-linecap="round"/><path d="M8.5 0.5 V2.5 M7.5 1.5 H9.5 M10.5 3 V4.5 M9.8 3.8 H11.2 M5.5 0.3 V1.5 M4.9 0.9 H6.1" stroke="#fff" stroke-width="0.8"/></svg>
<div class="abs tx" style="left:1792px;top:425.0px;line-height:20px;font-size:12px;color:#fff;font-weight:normal;">提现</div>
<div class="abs" style="left:1826px;top:424px;width:23px;height:22px;background:#18bc9c;border-radius:2px"></div>
<svg class="abs" style="left:1832px;top:429px" width="11" height="11" viewBox="0 0 12 12" ><path d="M1 11 L1.6 8.2 L8.5 1.3 L10.7 3.5 L3.8 10.4 Z" fill="#fff"/><path d="M1.6 8.6 L3.4 10.4" stroke="#18bc9c" stroke-width="0.7"/></svg>
<div class="abs" style="left:1853px;top:424px;width:21px;height:22px;background:#f75444;border-radius:2px"></div>
<svg class="abs" style="left:1858px;top:429px" width="11" height="12" viewBox="0 0 11 13" ><rect x="0" y="1.6" width="11" height="1.6" fill="#fff"/><rect x="3.5" y="0" width="4" height="2" fill="none" stroke="#fff" stroke-width="1"/><path d="M1 3.5 H10 L9.3 13 H1.7 Z" fill="#fff"/><rect x="3.2" y="5" width="1" height="6" fill="#f75444"/><rect x="5" y="5" width="1" height="6" fill="#f75444"/><rect x="6.8" y="5" width="1" height="6" fill="#f75444"/></svg>
<div class="abs" style="left:1615px;top:471px;width:75px;height:22px;background:#1e8bf0;border-radius:2px"></div>
<svg class="abs" style="left:1621px;top:476px" width="11" height="11" viewBox="0 0 12 11" ><path d="M1 10 L7.5 3.5" stroke="#fff" stroke-width="2.4" stroke-linecap="round"/><path d="M8.5 0.5 V2.5 M7.5 1.5 H9.5 M10.5 3 V4.5 M9.8 3.8 H11.2 M5.5 0.3 V1.5 M4.9 0.9 H6.1" stroke="#fff" stroke-width="0.8"/></svg>
<div class="abs tx" style="left:1635px;top:472.0px;line-height:20px;font-size:12px;color:#fff;font-weight:normal;">更新余额</div>
<div class="abs" style="left:1694px;top:471px;width:74px;height:22px;background:#f39c12;border-radius:2px"></div>
<svg class="abs" style="left:1699px;top:477px" width="12" height="10" viewBox="0 0 12 10" ><path d="M0.7 1 H4.5 L5.7 2.4 H11.3 V9.3 H0.7 Z" fill="none" stroke="#fff" stroke-width="1.3"/></svg>
<div class="abs tx" style="left:1715px;top:472.0px;line-height:20px;font-size:12px;color:#fff;font-weight:normal;">是否同步</div>
<div class="abs" style="left:1772px;top:471px;width:51px;height:22px;background:#1e8bf0;border-radius:2px"></div>
<svg class="abs" style="left:1778px;top:476px" width="11" height="11" viewBox="0 0 12 11" ><path d="M1 10 L7.5 3.5" stroke="#fff" stroke-width="2.4" stroke-linecap="round"/><path d="M8.5 0.5 V2.5 M7.5 1.5 H9.5 M10.5 3 V4.5 M9.8 3.8 H11.2 M5.5 0.3 V1.5 M4.9 0.9 H6.1" stroke="#fff" stroke-width="0.8"/></svg>
<div class="abs tx" style="left:1792px;top:472.0px;line-height:20px;font-size:12px;color:#fff;font-weight:normal;">提现</div>
<div class="abs" style="left:1826px;top:471px;width:23px;height:22px;background:#18bc9c;border-radius:2px"></div>
<svg class="abs" style="left:1832px;top:476px" width="11" height="11" viewBox="0 0 12 12" ><path d="M1 11 L1.6 8.2 L8.5 1.3 L10.7 3.5 L3.8 10.4 Z" fill="#fff"/><path d="M1.6 8.6 L3.4 10.4" stroke="#18bc9c" stroke-width="0.7"/></svg>
<div class="abs" style="left:1853px;top:471px;width:21px;height:22px;background:#f75444;border-radius:2px"></div>
<svg class="abs" style="left:1858px;top:476px" width="11" height="12" viewBox="0 0 11 13" ><rect x="0" y="1.6" width="11" height="1.6" fill="#fff"/><rect x="3.5" y="0" width="4" height="2" fill="none" stroke="#fff" stroke-width="1"/><path d="M1 3.5 H10 L9.3 13 H1.7 Z" fill="#fff"/><rect x="3.2" y="5" width="1" height="6" fill="#f75444"/><rect x="5" y="5" width="1" height="6" fill="#f75444"/><rect x="6.8" y="5" width="1" height="6" fill="#f75444"/></svg>
<div class="abs" style="left:1615px;top:518px;width:75px;height:22px;background:#1e8bf0;border-radius:2px"></div>
<svg class="abs" style="left:1621px;top:523px" width="11" height="11" viewBox="0 0 12 11" ><path d="M1 10 L7.5 3.5" stroke="#fff" stroke-width="2.4" stroke-linecap="round"/><path d="M8.5 0.5 V2.5 M7.5 1.5 H9.5 M10.5 3 V4.5 M9.8 3.8 H11.2 M5.5 0.3 V1.5 M4.9 0.9 H6.1" stroke="#fff" stroke-width="0.8"/></svg>
<div class="abs tx" style="left:1635px;top:519.0px;line-height:20px;font-size:12px;color:#fff;font-weight:normal;">更新余额</div>
<div class="abs" style="left:1694px;top:518px;width:74px;height:22px;background:#f39c12;border-radius:2px"></div>
<svg class="abs" style="left:1699px;top:524px" width="12" height="10" viewBox="0 0 12 10" ><path d="M0.7 1 H4.5 L5.7 2.4 H11.3 V9.3 H0.7 Z" fill="none" stroke="#fff" stroke-width="1.3"/></svg>
<div class="abs tx" style="left:1715px;top:519.0px;line-height:20px;font-size:12px;color:#fff;font-weight:normal;">是否同步</div>
<div class="abs" style="left:1772px;top:518px;width:51px;height:22px;background:#1e8bf0;border-radius:2px"></div>
<svg class="abs" style="left:1778px;top:523px" width="11" height="11" viewBox="0 0 12 11" ><path d="M1 10 L7.5 3.5" stroke="#fff" stroke-width="2.4" stroke-linecap="round"/><path d="M8.5 0.5 V2.5 M7.5 1.5 H9.5 M10.5 3 V4.5 M9.8 3.8 H11.2 M5.5 0.3 V1.5 M4.9 0.9 H6.1" stroke="#fff" stroke-width="0.8"/></svg>
<div class="abs tx" style="left:1792px;top:519.0px;line-height:20px;font-size:12px;color:#fff;font-weight:normal;">提现</div>
<div class="abs" style="left:1826px;top:518px;width:23px;height:22px;background:#18bc9c;border-radius:2px"></div>
<svg class="abs" style="left:1832px;top:523px" width="11" height="11" viewBox="0 0 12 12" ><path d="M1 11 L1.6 8.2 L8.5 1.3 L10.7 3.5 L3.8 10.4 Z" fill="#fff"/><path d="M1.6 8.6 L3.4 10.4" stroke="#18bc9c" stroke-width="0.7"/></svg>
<div class="abs" style="left:1853px;top:518px;width:21px;height:22px;background:#f75444;border-radius:2px"></div>
<svg class="abs" style="left:1858px;top:523px" width="11" height="12" viewBox="0 0 11 13" ><rect x="0" y="1.6" width="11" height="1.6" fill="#fff"/><rect x="3.5" y="0" width="4" height="2" fill="none" stroke="#fff" stroke-width="1"/><path d="M1 3.5 H10 L9.3 13 H1.7 Z" fill="#fff"/><rect x="3.2" y="5" width="1" height="6" fill="#f75444"/><rect x="5" y="5" width="1" height="6" fill="#f75444"/><rect x="6.8" y="5" width="1" height="6" fill="#f75444"/></svg>
<div class="abs" style="left:1615px;top:565px;width:75px;height:22px;background:#1e8bf0;border-radius:2px"></div>
<svg class="abs" style="left:1621px;top:570px" width="11" height="11" viewBox="0 0 12 11" ><path d="M1 10 L7.5 3.5" stroke="#fff" stroke-width="2.4" stroke-linecap="round"/><path d="M8.5 0.5 V2.5 M7.5 1.5 H9.5 M10.5 3 V4.5 M9.8 3.8 H11.2 M5.5 0.3 V1.5 M4.9 0.9 H6.1" stroke="#fff" stroke-width="0.8"/></svg>
<div class="abs tx" style="left:1635px;top:566.0px;line-height:20px;font-size:12px;color:#fff;font-weight:normal;">更新余额</div>
<div class="abs" style="left:1694px;top:565px;width:74px;height:22px;background:#f39c12;border-radius:2px"></div>
<svg class="abs" style="left:1699px;top:571px" width="12" height="10" viewBox="0 0 12 10" ><path d="M0.7 1 H4.5 L5.7 2.4 H11.3 V9.3 H0.7 Z" fill="none" stroke="#fff" stroke-width="1.3"/></svg>
<div class="abs tx" style="left:1715px;top:566.0px;line-height:20px;font-size:12px;color:#fff;font-weight:normal;">是否同步</div>
<div class="abs" style="left:1772px;top:565px;width:51px;height:22px;background:#1e8bf0;border-radius:2px"></div>
<svg class="abs" style="left:1778px;top:570px" width="11" height="11" viewBox="0 0 12 11" ><path d="M1 10 L7.5 3.5" stroke="#fff" stroke-width="2.4" stroke-linecap="round"/><path d="M8.5 0.5 V2.5 M7.5 1.5 H9.5 M10.5 3 V4.5 M9.8 3.8 H11.2 M5.5 0.3 V1.5 M4.9 0.9 H6.1" stroke="#fff" stroke-width="0.8"/></svg>
<div class="abs tx" style="left:1792px;top:566.0px;line-height:20px;font-size:12px;color:#fff;font-weight:normal;">提现</div>
<div class="abs" style="left:1826px;top:565px;width:23px;height:22px;background:#18bc9c;border-radius:2px"></div>
<svg class="abs" style="left:1832px;top:570px" width="11" height="11" viewBox="0 0 12 12" ><path d="M1 11 L1.6 8.2 L8.5 1.3 L10.7 3.5 L3.8 10.4 Z" fill="#fff"/><path d="M1.6 8.6 L3.4 10.4" stroke="#18bc9c" stroke-width="0.7"/></svg>
<div class="abs" style="left:1853px;top:565px;width:21px;height:22px;background:#f75444;border-radius:2px"></div>
<svg class="abs" style="left:1858px;top:570px" width="11" height="12" viewBox="0 0 11 13" ><rect x="0" y="1.6" width="11" height="1.6" fill="#fff"/><rect x="3.5" y="0" width="4" height="2" fill="none" stroke="#fff" stroke-width="1"/><path d="M1 3.5 H10 L9.3 13 H1.7 Z" fill="#fff"/><rect x="3.2" y="5" width="1" height="6" fill="#f75444"/><rect x="5" y="5" width="1" height="6" fill="#f75444"/><rect x="6.8" y="5" width="1" height="6" fill="#f75444"/></svg>
<div class="abs" style="left:1615px;top:612px;width:75px;height:22px;background:#1e8bf0;border-radius:2px"></div>
<svg class="abs" style="left:1621px;top:617px" width="11" height="11" viewBox="0 0 12 11" ><path d="M1 10 L7.5 3.5" stroke="#fff" stroke-width="2.4" stroke-linecap="round"/><path d="M8.5 0.5 V2.5 M7.5 1.5 H9.5 M10.5 3 V4.5 M9.8 3.8 H11.2 M5.5 0.3 V1.5 M4.9 0.9 H6.1" stroke="#fff" stroke-width="0.8"/></svg>
<div class="abs tx" style="left:1635px;top:613.0px;line-height:20px;font-size:12px;color:#fff;font-weight:normal;">更新余额</div>
<div class="abs" style="left:1694px;top:612px;width:74px;height:22px;background:#f39c12;border-radius:2px"></div>
<svg class="abs" style="left:1699px;top:618px" width="12" height="10" viewBox="0 0 12 10" ><path d="M0.7 1 H4.5 L5.7 2.4 H11.3 V9.3 H0.7 Z" fill="none" stroke="#fff" stroke-width="1.3"/></svg>
<div class="abs tx" style="left:1715px;top:613.0px;line-height:20px;font-size:12px;color:#fff;font-weight:normal;">是否同步</div>
<div class="abs" style="left:1772px;top:612px;width:51px;height:22px;background:#1e8bf0;border-radius:2px"></div>
<svg class="abs" style="left:1778px;top:617px" width="11" height="11" viewBox="0 0 12 11" ><path d="M1 10 L7.5 3.5" stroke="#fff" stroke-width="2.4" stroke-linecap="round"/><path d="M8.5 0.5 V2.5 M7.5 1.5 H9.5 M10.5 3 V4.5 M9.8 3.8 H11.2 M5.5 0.3 V1.5 M4.9 0.9 H6.1" stroke="#fff" stroke-width="0.8"/></svg>
<div class="abs tx" style="left:1792px;top:613.0px;line-height:20px;font-size:12px;color:#fff;font-weight:normal;">提现</div>
<div class="abs" style="left:1826px;top:612px;width:23px;height:22px;background:#18bc9c;border-radius:2px"></div>
<svg class="abs" style="left:1832px;top:617px" width="11" height="11" viewBox="0 0 12 12" ><path d="M1 11 L1.6 8.2 L8.5 1.3 L10.7 3.5 L3.8 10.4 Z" fill="#fff"/><path d="M1.6 8.6 L3.4 10.4" stroke="#18bc9c" stroke-width="0.7"/></svg>
<div class="abs" style="left:1853px;top:612px;width:21px;height:22px;background:#f75444;border-radius:2px"></div>
<svg class="abs" style="left:1858px;top:617px" width="11" height="12" viewBox="0 0 11 13" ><rect x="0" y="1.6" width="11" height="1.6" fill="#fff"/><rect x="3.5" y="0" width="4" height="2" fill="none" stroke="#fff" stroke-width="1"/><path d="M1 3.5 H10 L9.3 13 H1.7 Z" fill="#fff"/><rect x="3.2" y="5" width="1" height="6" fill="#f75444"/><rect x="5" y="5" width="1" height="6" fill="#f75444"/><rect x="6.8" y="5" width="1" height="6" fill="#f75444"/></svg>
<div class="abs" style="left:1615px;top:659px;width:75px;height:22px;background:#1e8bf0;border-radius:2px"></div>
<svg class="abs" style="left:1621px;top:664px" width="11" height="11" viewBox="0 0 12 11" ><path d="M1 10 L7.5 3.5" stroke="#fff" stroke-width="2.4" stroke-linecap="round"/><path d="M8.5 0.5 V2.5 M7.5 1.5 H9.5 M10.5 3 V4.5 M9.8 3.8 H11.2 M5.5 0.3 V1.5 M4.9 0.9 H6.1" stroke="#fff" stroke-width="0.8"/></svg>
<div class="abs tx" style="left:1635px;top:660.0px;line-height:20px;font-size:12px;color:#fff;font-weight:normal;">更新余额</div>
<div class="abs" style="left:1694px;top:659px;width:74px;height:22px;background:#f39c12;border-radius:2px"></div>
<svg class="abs" style="left:1699px;top:665px" width="12" height="10" viewBox="0 0 12 10" ><path d="M0.7 1 H4.5 L5.7 2.4 H11.3 V9.3 H0.7 Z" fill="none" stroke="#fff" stroke-width="1.3"/></svg>
<div class="abs tx" style="left:1715px;top:660.0px;line-height:20px;font-size:12px;color:#fff;font-weight:normal;">是否同步</div>
<div class="abs" style="left:1772px;top:659px;width:51px;height:22px;background:#1e8bf0;border-radius:2px"></div>
<svg class="abs" style="left:1778px;top:664px" width="11" height="11" viewBox="0 0 12 11" ><path d="M1 10 L7.5 3.5" stroke="#fff" stroke-width="2.4" stroke-linecap="round"/><path d="M8.5 0.5 V2.5 M7.5 1.5 H9.5 M10.5 3 V4.5 M9.8 3.8 H11.2 M5.5 0.3 V1.5 M4.9 0.9 H6.1" stroke="#fff" stroke-width="0.8"/></svg>
<div class="abs tx" style="left:1792px;top:660.0px;line-height:20px;font-size:12px;color:#fff;font-weight:normal;">提现</div>
<div class="abs" style="left:1826px;top:659px;width:23px;height:22px;background:#18bc9c;border-radius:2px"></div>
<svg class="abs" style="left:1832px;top:664px" width="11" height="11" viewBox="0 0 12 12" ><path d="M1 11 L1.6 8.2 L8.5 1.3 L10.7 3.5 L3.8 10.4 Z" fill="#fff"/><path d="M1.6 8.6 L3.4 10.4" stroke="#18bc9c" stroke-width="0.7"/></svg>
<div class="abs" style="left:1853px;top:659px;width:21px;height:22px;background:#f75444;border-radius:2px"></div>
<svg class="abs" style="left:1858px;top:664px" width="11" height="12" viewBox="0 0 11 13" ><rect x="0" y="1.6" width="11" height="1.6" fill="#fff"/><rect x="3.5" y="0" width="4" height="2" fill="none" stroke="#fff" stroke-width="1"/><path d="M1 3.5 H10 L9.3 13 H1.7 Z" fill="#fff"/><rect x="3.2" y="5" width="1" height="6" fill="#f75444"/><rect x="5" y="5" width="1" height="6" fill="#f75444"/><rect x="6.8" y="5" width="1" height="6" fill="#f75444"/></svg>
<div class="abs" style="left:1615px;top:706px;width:75px;height:22px;background:#1e8bf0;border-radius:2px"></div>
<svg class="abs" style="left:1621px;top:711px" width="11" height="11" viewBox="0 0 12 11" ><path d="M1 10 L7.5 3.5" stroke="#fff" stroke-width="2.4" stroke-linecap="round"/><path d="M8.5 0.5 V2.5 M7.5 1.5 H9.5 M10.5 3 V4.5 M9.8 3.8 H11.2 M5.5 0.3 V1.5 M4.9 0.9 H6.1" stroke="#fff" stroke-width="0.8"/></svg>
<div class="abs tx" style="left:1635px;top:707.0px;line-height:20px;font-size:12px;color:#fff;font-weight:normal;">更新余额</div>
<div class="abs" style="left:1694px;top:706px;width:74px;height:22px;background:#f39c12;border-radius:2px"></div>
<svg class="abs" style="left:1699px;top:712px" width="12" height="10" viewBox="0 0 12 10" ><path d="M0.7 1 H4.5 L5.7 2.4 H11.3 V9.3 H0.7 Z" fill="none" stroke="#fff" stroke-width="1.3"/></svg>
<div class="abs tx" style="left:1715px;top:707.0px;line-height:20px;font-size:12px;color:#fff;font-weight:normal;">是否同步</div>
<div class="abs" style="left:1772px;top:706px;width:51px;height:22px;background:#1e8bf0;border-radius:2px"></div>
<svg class="abs" style="left:1778px;top:711px" width="11" height="11" viewBox="0 0 12 11" ><path d="M1 10 L7.5 3.5" stroke="#fff" stroke-width="2.4" stroke-linecap="round"/><path d="M8.5 0.5 V2.5 M7.5 1.5 H9.5 M10.5 3 V4.5 M9.8 3.8 H11.2 M5.5 0.3 V1.5 M4.9 0.9 H6.1" stroke="#fff" stroke-width="0.8"/></svg>
<div class="abs tx" style="left:1792px;top:707.0px;line-height:20px;font-size:12px;color:#fff;font-weight:normal;">提现</div>
<div class="abs" style="left:1826px;top:706px;width:23px;height:22px;background:#18bc9c;border-radius:2px"></div>
<svg class="abs" style="left:1832px;top:711px" width="11" height="11" viewBox="0 0 12 12" ><path d="M1 11 L1.6 8.2 L8.5 1.3 L10.7 3.5 L3.8 10.4 Z" fill="#fff"/><path d="M1.6 8.6 L3.4 10.4" stroke="#18bc9c" stroke-width="0.7"/></svg>
<div class="abs" style="left:1853px;top:706px;width:21px;height:22px;background:#f75444;border-radius:2px"></div>
<svg class="abs" style="left:1858px;top:711px" width="11" height="12" viewBox="0 0 11 13" ><rect x="0" y="1.6" width="11" height="1.6" fill="#fff"/><rect x="3.5" y="0" width="4" height="2" fill="none" stroke="#fff" stroke-width="1"/><path d="M1 3.5 H10 L9.3 13 H1.7 Z" fill="#fff"/><rect x="3.2" y="5" width="1" height="6" fill="#f75444"/><rect x="5" y="5" width="1" height="6" fill="#f75444"/><rect x="6.8" y="5" width="1" height="6" fill="#f75444"/></svg>
<div class="abs" style="left:1615px;top:753px;width:75px;height:22px;background:#1e8bf0;border-radius:2px"></div>
<svg class="abs" style="left:1621px;top:758px" width="11" height="11" viewBox="0 0 12 11" ><path d="M1 10 L7.5 3.5" stroke="#fff" stroke-width="2.4" stroke-linecap="round"/><path d="M8.5 0.5 V2.5 M7.5 1.5 H9.5 M10.5 3 V4.5 M9.8 3.8 H11.2 M5.5 0.3 V1.5 M4.9 0.9 H6.1" stroke="#fff" stroke-width="0.8"/></svg>
<div class="abs tx" style="left:1635px;top:754.0px;line-height:20px;font-size:12px;color:#fff;font-weight:normal;">更新余额</div>
<div class="abs" style="left:1694px;top:753px;width:74px;height:22px;background:#f39c12;border-radius:2px"></div>
<svg class="abs" style="left:1699px;top:759px" width="12" height="10" viewBox="0 0 12 10" ><path d="M0.7 1 H4.5 L5.7 2.4 H11.3 V9.3 H0.7 Z" fill="none" stroke="#fff" stroke-width="1.3"/></svg>
<div class="abs tx" style="left:1715px;top:754.0px;line-height:20px;font-size:12px;color:#fff;font-weight:normal;">是否同步</div>
<div class="abs" style="left:1772px;top:753px;width:51px;height:22px;background:#1e8bf0;border-radius:2px"></div>
<svg class="abs" style="left:1778px;top:758px" width="11" height="11" viewBox="0 0 12 11" ><path d="M1 10 L7.5 3.5" stroke="#fff" stroke-width="2.4" stroke-linecap="round"/><path d="M8.5 0.5 V2.5 M7.5 1.5 H9.5 M10.5 3 V4.5 M9.8 3.8 H11.2 M5.5 0.3 V1.5 M4.9 0.9 H6.1" stroke="#fff" stroke-width="0.8"/></svg>
<div class="abs tx" style="left:1792px;top:754.0px;line-height:20px;font-size:12px;color:#fff;font-weight:normal;">提现</div>
<div class="abs" style="left:1826px;top:753px;width:23px;height:22px;background:#18bc9c;border-radius:2px"></div>
<svg class="abs" style="left:1832px;top:758px" width="11" height="11" viewBox="0 0 12 12" ><path d="M1 11 L1.6 8.2 L8.5 1.3 L10.7 3.5 L3.8 10.4 Z" fill="#fff"/><path d="M1.6 8.6 L3.4 10.4" stroke="#18bc9c" stroke-width="0.7"/></svg>
<div class="abs" style="left:1853px;top:753px;width:21px;height:22px;background:#f75444;border-radius:2px"></div>
<svg class="abs" style="left:1858px;top:758px" width="11" height="12" viewBox="0 0 11 13" ><rect x="0" y="1.6" width="11" height="1.6" fill="#fff"/><rect x="3.5" y="0" width="4" height="2" fill="none" stroke="#fff" stroke-width="1"/><path d="M1 3.5 H10 L9.3 13 H1.7 Z" fill="#fff"/><rect x="3.2" y="5" width="1" height="6" fill="#f75444"/><rect x="5" y="5" width="1" height="6" fill="#f75444"/><rect x="6.8" y="5" width="1" height="6" fill="#f75444"/></svg>
<div class="abs" style="left:260px;top:789px;width:1630px;height:16px;background:#f1f1f1"></div>
<div class="abs" style="left:277px;top:790px;width:1387px;height:13px;background:#c1c1c1"></div>
<svg class="abs" style="left:1878px;top:793px" width="6" height="9" viewBox="0 0 6 9" ><path d="M0 0 L5 4.5 L0 9 Z" fill="#505050"/></svg>
<svg class="abs" style="left:265px;top:793px" width="6" height="9" viewBox="0 0 6 9" ><path d="M5 0 L0 4.5 L5 9 Z" fill="#a3a3a3"/></svg>
<div class="abs tx" style="left:260px;top:822.0px;line-height:20px;font-size:14px;color:#333;font-weight:normal;">显示第 1 到第 10 条记录，总共 41 条记录 每页显示</div>
<div class="abs" style="left:583px;top:817px;width:51px;height:33px;background:#f4f4f4;border:1px solid #ddd;border-radius:3px"></div>
<div class="abs tx" style="left:597px;top:823.0px;line-height:20px;font-size:13px;color:#333;font-weight:normal;">10</div>
<svg class="abs" style="left:614px;top:832px" width="8" height="4" viewBox="0 0 8 4" ><path d="M0 4 L4 0 L8 4 Z" fill="#333"/></svg>
<div class="abs tx" style="left:640px;top:822.0px;line-height:20px;font-size:14px;color:#333;font-weight:normal;">条记录</div>
<div class="abs" style="left:1479px;top:815px;width:299px;height:34px;background:#fafafa;border:1px solid #ddd;border-radius:3px"></div>
<div class="abs" style="left:1546px;top:815px;width:1px;height:34px;background:#ddd"></div>
<div class="abs" style="left:1580px;top:815px;width:1px;height:34px;background:#ddd"></div>
<div class="abs" style="left:1612px;top:815px;width:1px;height:34px;background:#ddd"></div>
<div class="abs" style="left:1645px;top:815px;width:1px;height:34px;background:#ddd"></div>
<div class="abs" style="left:1677px;top:815px;width:1px;height:34px;background:#ddd"></div>
<div class="abs" style="left:1710px;top:815px;width:1px;height:34px;background:#ddd"></div>
<div class="abs" style="left:1546px;top:815px;width:34px;height:34px;background:#444c69"></div>
<div class="abs tx" style="left:1479.0px;top:822.0px;width:67px;text-align:center;line-height:20px;font-size:14px;color:#555;font-weight:normal;">上一页</div>
<div class="abs tx" style="left:1546.0px;top:822.0px;width:34px;text-align:center;line-height:20px;font-size:14px;color:#fff;font-weight:normal;">1</div>
<div class="abs tx" style="left:1580.0px;top:822.0px;width:32px;text-align:center;line-height:20px;font-size:14px;color:#555;font-weight:normal;">2</div>
<div class="abs tx" style="left:1612.5px;top:822.0px;width:32px;text-align:center;line-height:20px;font-size:14px;color:#555;font-weight:normal;">3</div>
<div class="abs tx" style="left:1645.0px;top:822.0px;width:32px;text-align:center;line-height:20px;font-size:14px;color:#555;font-weight:normal;">4</div>
<div class="abs tx" style="left:1677.5px;top:822.0px;width:32px;text-align:center;line-height:20px;font-size:14px;color:#555;font-weight:normal;">5</div>
<div class="abs tx" style="left:1710.0px;top:822.0px;width:68px;text-align:center;line-height:20px;font-size:14px;color:#555;font-weight:normal;">下一页</div>
<div class="abs" style="left:1783px;top:815px;width:50px;height:33px;border:1px solid #ccd3e0;background:#fff"></div>
<div class="abs" style="left:1838px;top:816px;width:52px;height:33px;background:#f4f4f4;border:1px solid #ddd;border-radius:3px"></div>
<div class="abs tx" style="left:1838.0px;top:822.0px;width:52px;text-align:center;line-height:20px;font-size:14px;color:#333;font-weight:normal;">跳转</div>
<svg class="abs" style="left:230px;top:780px" width="310" height="50" viewBox="0 0 310 50" ><g transform="scale(0.08072979736820861)" fill="#0b6cf6" stroke="#0b6cf6" stroke-linejoin="round" stroke-width="16"><path d="M110,120 Q180,120 210,165 Q170,210 125,215 Q150,170 110,120 Z"/><path d="M85,255 Q140,240 160,300 Q190,400 185,480 Q140,500 100,470 Q55,400 70,300 Z"/><path d="M1200,170 Q1240,140 1260,190 Q1160,320 1080,360 Q1040,330 1060,280 Q1130,240 1200,170 Z"/><path d="M1060,300 Q1250,220 1330,300 Q1300,420 1060,490 Q1050,470 1090,450 Q1200,400 1230,330 Q1150,340 1060,350 Z"/><path d="M1010,410 Q1150,380 1220,340 L1230,380 Q1100,420 1020,420 Z"/><path d="M1390,70 Q1450,50 1500,80 Q1460,200 1450,300 L1450,520 Q1420,530 1380,470 Q1400,300 1390,70 Z"/><path d="M1450,300 Q1650,330 1820,340 Q1840,380 1780,400 Q1720,390 1700,400 Q1600,350 1450,340 Z"/></g><g transform="translate(150,0) scale(0.08072979736820861)" fill="#0b6cf6" stroke="#0b6cf6" stroke-linejoin="round" stroke-width="16"><path d="M180,135 Q260,150 280,190 Q240,220 205,215 Q210,170 180,135 Z"/><path d="M85,260 Q180,300 210,340 Q270,300 290,280 Q250,380 190,470 Q160,520 120,510 Q80,480 100,440 Q160,380 200,350 Q140,300 85,260 Z"/><path d="M390,100 Q500,80 630,50 Q720,60 720,75 Q650,90 460,130 Q420,120 390,100 Z"/><path d="M400,110 L470,110 Q440,300 390,420 Q360,500 310,510 Q300,450 340,400 Q380,300 400,110 Z"/><path d="M470,140 Q600,130 620,160 Q600,200 540,225 Q700,200 800,240 Q800,300 700,330 Q600,360 520,380 L510,320 Q600,300 700,270 Q620,250 480,250 Z"/><path d="M600,320 Q640,400 660,520 Q620,520 580,480 Q580,400 600,320 Z"/><path d="M420,450 Q500,430 560,440 L520,470 Q460,470 420,450 Z"/><path d="M680,400 Q800,400 850,440 Q830,470 780,460 Q720,430 680,400 Z"/></g><g transform="translate(25,2) scale(0.043440486533449174)" fill="#0b6cf6" stroke="#0b6cf6" stroke-linejoin="round" stroke-width="14"><path fill-rule="evenodd" d="M160,260 Q170,120 250,75 Q330,80 335,180 L520,170 Q620,160 700,200 Q660,260 580,350 Q800,390 1050,510 Q1020,550 900,560 Q870,700 800,800 Q720,790 600,780 Q400,790 200,880 Q90,870 80,700 Q0,680 0,650 Q150,620 230,590 Q320,450 430,300 Q340,300 300,340 Q180,330 160,260 Z M290,720 Q380,640 500,615 Q480,690 300,725 Z M640,580 Q700,540 740,550 Q730,650 690,690 Q640,680 640,580 Z M420,545 L495,460 L520,530 Z M540,400 Q650,420 720,470 Q640,490 560,430 Z"/></g><g transform="scale(0.08072979736820861)"><path d="M130,380 Q260,200 445,80" fill="none" stroke="#0b6cf6" stroke-width="22"/></g><g transform="translate(230,2) scale(0.046707146193367584)" fill="#0b6cf6" stroke="#0b6cf6" stroke-linejoin="round" stroke-width="14"><path d="M150,265 Q300,220 560,215 Q610,240 590,300 Q520,300 400,300 Q250,320 150,265 Z"/><path d="M440,240 L590,260 Q600,330 560,400 Q450,520 300,700 Q150,830 30,840 Q0,800 0,720 Q200,560 400,320 Z"/><path d="M420,560 L570,500 Q640,600 600,700 Q560,790 500,770 Q430,700 420,650 Z"/><path d="M900,120 Q1000,90 1200,120 Q1290,160 1270,200 Q1200,280 1100,330 L1000,400 L1380,410 Q1480,430 1500,560 Q1500,700 1380,800 Q1250,850 1100,820 Q950,790 850,770 Q1000,760 1150,770 Q1300,760 1370,700 Q1400,650 1390,560 Q1370,470 1300,450 Q1100,440 880,560 Q830,600 800,580 Q720,500 760,380 Q790,250 830,200 Q900,170 980,190 L960,380 L1100,180 Q1000,140 900,120 Z"/><path d="M690,680 Q900,600 1300,630 Q1280,680 1100,700 Q900,720 690,680 Z"/></g></svg>
<div class="abs tx" style="left:261px;top:826.0px;line-height:20px;font-size:25.6px;color:#f00;font-weight:bold;line-height:30px;top:822px">www.haiwaiym.com</div></body></html>
